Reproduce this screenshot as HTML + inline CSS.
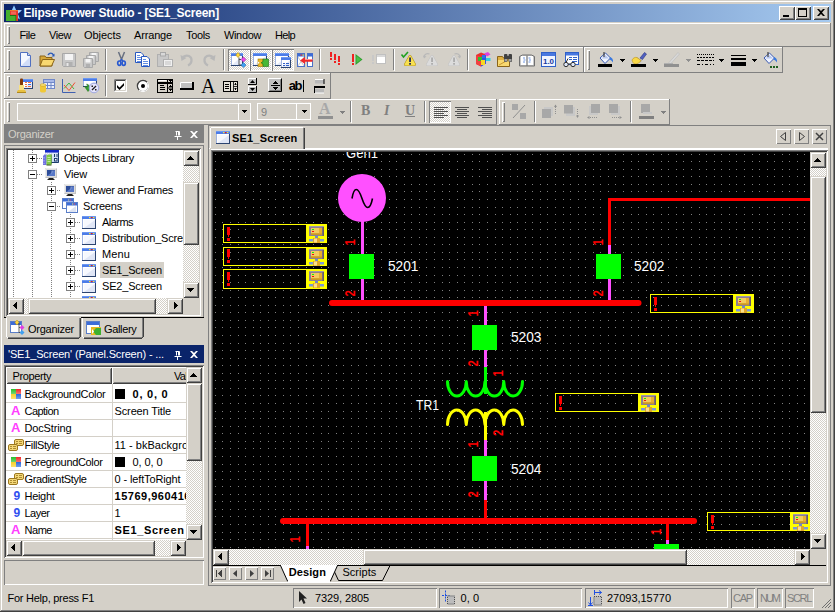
<!DOCTYPE html><html><head><meta charset="utf-8"><title>Elipse Power Studio - [SE1_Screen]</title><style>html,body{margin:0;padding:0;background:#D4D0C8;}body{width:835px;height:612px;position:relative;overflow:hidden;font-family:"Liberation Sans",sans-serif;font-size:11px;}body div,body span,body svg{position:absolute;display:block;box-sizing:border-box;}svg{overflow:visible;}</style></head><body><div style="left:0px;top:0px;width:835px;height:612px;background:#D4D0C8;"></div>
<div style="left:0px;top:0px;width:835px;height:1px;background:#D4D0C8;"></div>
<div style="left:0px;top:0px;width:1px;height:612px;background:#D4D0C8;"></div>
<div style="left:1px;top:1px;width:833px;height:1px;background:#FFFFFF;"></div>
<div style="left:1px;top:1px;width:1px;height:610px;background:#FFFFFF;"></div>
<div style="left:0px;top:611px;width:835px;height:1px;background:#404040;"></div>
<div style="left:834px;top:0px;width:1px;height:612px;background:#404040;"></div>
<div style="left:1px;top:610px;width:833px;height:1px;background:#808080;"></div>
<div style="left:833px;top:1px;width:1px;height:610px;background:#808080;"></div>
<div style="left:4px;top:4px;width:827px;height:18px;background:linear-gradient(90deg,#0A246A 0%,#A6CAF0 100%);"></div>
<span id="t1" style="left:23.5px;top:6px;font-size:12px;color:#fff;line-height:14px;white-space:pre;font-weight:bold;letter-spacing:-0.233px;">Elipse Power Studio - [SE1_Screen]</span>
<div style="left:779px;top:6px;width:16px;height:14px;background:#D4D0C8;box-shadow:inset 1px 1px 0 #fff,inset -1px -1px 0 #404040,inset 2px 2px 0 #D4D0C8,inset -2px -2px 0 #808080;"></div>
<div style="left:795px;top:6px;width:16px;height:14px;background:#D4D0C8;box-shadow:inset 1px 1px 0 #fff,inset -1px -1px 0 #404040,inset 2px 2px 0 #D4D0C8,inset -2px -2px 0 #808080;"></div>
<div style="left:813px;top:6px;width:16px;height:14px;background:#D4D0C8;box-shadow:inset 1px 1px 0 #fff,inset -1px -1px 0 #404040,inset 2px 2px 0 #D4D0C8,inset -2px -2px 0 #808080;"></div>
<div style="left:783px;top:15px;width:6px;height:2px;background:#000000;"></div>
<div style="left:798px;top:8px;width:9px;height:9px;border:1px solid #000;border-top:2px solid #000;"></div>
<svg style="left:817px;top:9px;" width="8" height="7" viewBox="0 0 8 7"><path d="M0 0h2l2 2l2-2h2l-3 3.5l3 3.5h-2l-2-2l-2 2h-2l3-3.5z" fill="#000"/></svg>
<svg style="left:4px;top:4px;" width="20" height="18" viewBox="0 0 20 18"><path d="M10 1.200l2.200 5h5.600l-4 3.600l2.200 5.700l-6-3.800l-6 3.800l2.200-5.700l-4-3.600h5.600z" fill="#8CC8FF"/><path d="M10 1.200l2.200 5h5.600l-4 3.600l2.200 5.700z" fill="#A8D4FF"/><rect x="2" y="6" width="12" height="11" fill="#3FA82F"/><path d="M6 6h8v11h-2v-6h-6z" fill="#E8382C"/><path d="M6 6h8v1h-8z" fill="#F07830"/><path d="M7 7.500h5v3h-5z" fill="#F06858"/><path d="M2 6h4v5h6v6h-10z" fill="#44B030"/><path d="M6 11h6v1h-6z" fill="#207010"/><path d="M11.500 11v6h.8v-6z" fill="#207010"/></svg>
<div style="left:4px;top:23px;width:827px;height:1px;background:#FFFFFF;"></div><div style="left:4px;top:23px;width:1px;height:24px;background:#FFFFFF;"></div><div style="left:4px;top:46px;width:827px;height:1px;background:#808080;"></div><div style="left:830px;top:23px;width:1px;height:24px;background:#808080;"></div><div style="left:7px;top:26px;width:3px;height:18px;background:#D4D0C8;box-shadow:inset 1px 1px 0 #fff,inset -1px -1px 0 #808080;"></div>
<span id="t2" style="left:19.5px;top:28px;font-size:11px;color:#000;line-height:14px;white-space:pre;letter-spacing:-0.434px;">File</span>
<span id="t3" style="left:49px;top:28px;font-size:11px;color:#000;line-height:14px;white-space:pre;letter-spacing:-0.414px;">View</span>
<span id="t4" style="left:84px;top:28px;font-size:11px;color:#000;line-height:14px;white-space:pre;letter-spacing:-0.042px;">Objects</span>
<span id="t5" style="left:134px;top:28px;font-size:11px;color:#000;line-height:14px;white-space:pre;letter-spacing:-0.163px;">Arrange</span>
<span id="t6" style="left:186px;top:28px;font-size:11px;color:#000;line-height:14px;white-space:pre;letter-spacing:-0.338px;">Tools</span>
<span id="t7" style="left:224px;top:28px;font-size:11px;color:#000;line-height:14px;white-space:pre;letter-spacing:-0.354px;">Window</span>
<span id="t8" style="left:275px;top:28px;font-size:11px;color:#000;line-height:14px;white-space:pre;letter-spacing:-0.656px;">Help</span>
<div style="left:4px;top:47px;width:580px;height:1px;background:#FFFFFF;"></div><div style="left:4px;top:47px;width:1px;height:26px;background:#FFFFFF;"></div><div style="left:4px;top:72px;width:580px;height:1px;background:#808080;"></div><div style="left:583px;top:47px;width:1px;height:26px;background:#808080;"></div><div style="left:7px;top:50px;width:3px;height:20px;background:#D4D0C8;box-shadow:inset 1px 1px 0 #fff,inset -1px -1px 0 #808080;"></div>
<div style="left:584px;top:47px;width:199px;height:1px;background:#FFFFFF;"></div><div style="left:584px;top:47px;width:1px;height:26px;background:#FFFFFF;"></div><div style="left:584px;top:72px;width:199px;height:1px;background:#808080;"></div><div style="left:782px;top:47px;width:1px;height:26px;background:#808080;"></div><div style="left:587px;top:50px;width:3px;height:20px;background:#D4D0C8;box-shadow:inset 1px 1px 0 #fff,inset -1px -1px 0 #808080;"></div>
<div style="left:4px;top:73px;width:327px;height:1px;background:#FFFFFF;"></div><div style="left:4px;top:73px;width:1px;height:26px;background:#FFFFFF;"></div><div style="left:4px;top:98px;width:327px;height:1px;background:#808080;"></div><div style="left:330px;top:73px;width:1px;height:26px;background:#808080;"></div><div style="left:7px;top:76px;width:3px;height:20px;background:#D4D0C8;box-shadow:inset 1px 1px 0 #fff,inset -1px -1px 0 #808080;"></div>
<div style="left:4px;top:99px;width:493px;height:1px;background:#FFFFFF;"></div><div style="left:4px;top:99px;width:1px;height:26px;background:#FFFFFF;"></div><div style="left:4px;top:124px;width:493px;height:1px;background:#808080;"></div><div style="left:496px;top:99px;width:1px;height:26px;background:#808080;"></div><div style="left:7px;top:102px;width:3px;height:20px;background:#D4D0C8;box-shadow:inset 1px 1px 0 #fff,inset -1px -1px 0 #808080;"></div>
<div style="left:499px;top:99px;width:171px;height:1px;background:#FFFFFF;"></div><div style="left:499px;top:99px;width:1px;height:26px;background:#FFFFFF;"></div><div style="left:499px;top:124px;width:171px;height:1px;background:#808080;"></div><div style="left:669px;top:99px;width:1px;height:26px;background:#808080;"></div><div style="left:502px;top:102px;width:3px;height:20px;background:#D4D0C8;box-shadow:inset 1px 1px 0 #fff,inset -1px -1px 0 #808080;"></div>
<svg style="left:17px;top:52px;" width="16" height="16" viewBox="0 0 16 16"><path d="M3.500 0.500h7l3 3v11h-10z" fill="#fff" stroke="#5070C0"/><path d="M4 1h6v3h3v10h-9z" fill="#F4F7FF"/><path d="M13 5v9h-9z" fill="#D0DCF8"/><path d="M10.500 0.500v3h3" fill="#C8D4F0" stroke="#5070C0"/></svg>
<svg style="left:39px;top:52px;" width="16" height="16" viewBox="0 0 16 16"><path d="M1 4h5l1 1.500h6v8.500h-12z" fill="#D8A838" stroke="#8A6418"/><path d="M3.500 7.500h12l-3 6.500h-11.500z" fill="#F8D870" stroke="#8A6418"/><path d="M9 3c1.500-2.500 4-2.500 5.500 0" fill="none" stroke="#2858B8" stroke-width="1.400"/><path d="M15.500 1.500v3h-3z" fill="#2858B8"/></svg>
<svg style="left:61px;top:52px;" width="16" height="16" viewBox="0 0 16 16"><path d="M1.500 1.500h13v13h-12l-1-1z" fill="#C8C8C8" stroke="#A8A8A8"/><rect x="4" y="2" width="8" height="6" fill="#F4F4F4"/><rect x="4.500" y="10" width="7" height="4.500" fill="#B0B0B0"/><rect x="5.500" y="11" width="2" height="3" fill="#E8E8E8"/></svg>
<svg style="left:83px;top:52px;" width="16" height="16" viewBox="0 0 16 16"><g transform="translate(6,0)"><path d="M0.500 0.500h9v9h-8l-1-1z" fill="#C8C8C8" stroke="#A8A8A8"/><rect x="2.500" y="1" width="5" height="3.500" fill="#F4F4F4"/><rect x="3" y="6" width="4" height="3" fill="#B0B0B0"/></g><g transform="translate(3,3)"><path d="M0.500 0.500h9v9h-8l-1-1z" fill="#C8C8C8" stroke="#A8A8A8"/><rect x="2.500" y="1" width="5" height="3.500" fill="#F4F4F4"/><rect x="3" y="6" width="4" height="3" fill="#B0B0B0"/></g><g transform="translate(0,6)"><path d="M0.500 0.500h9v9h-8l-1-1z" fill="#C8C8C8" stroke="#A8A8A8"/><rect x="2.500" y="1" width="5" height="3.500" fill="#F4F4F4"/><rect x="3" y="6" width="4" height="3" fill="#B0B0B0"/></g></svg>
<div style="left:105px;top:49px;width:1px;height:21px;background:#808080;"></div><div style="left:106px;top:49px;width:1px;height:22px;background:#FFFFFF;"></div>
<svg style="left:113px;top:52px;" width="16" height="16" viewBox="0 0 16 16"><path d="M5.500 0l3.500 8.500M11.500 0l-3.500 8.500" stroke="#687080" stroke-width="1.500" fill="none"/><ellipse cx="6.300" cy="11.200" rx="1.600" ry="2.200" fill="none" stroke="#2858D0" stroke-width="1.700"/><ellipse cx="10.700" cy="11.200" rx="1.600" ry="2.200" fill="none" stroke="#2858D0" stroke-width="1.700"/><path d="M7 9l1.500-1.500l1.500 1.500" stroke="#2858D0" stroke-width="1.400" fill="none"/></svg>
<svg style="left:135px;top:52px;" width="16" height="16" viewBox="0 0 16 16"><g transform="translate(0,0)"><path d="M0.500 0.500h5.500l2.500 2.500v7.500h-8z" fill="#fff" stroke="#2858C0"/><path d="M2 3.500h3M2 5.500h5M2 7.500h5M2 9.500h5" stroke="#5080E0" stroke-width=".9"/></g><g transform="translate(6,4)"><path d="M0.500 0.500h5.500l2.500 2.500v7.500h-8z" fill="#fff" stroke="#2858C0"/><path d="M2 3.500h3M2 5.500h5M2 7.500h5M2 9.500h5" stroke="#5080E0" stroke-width=".9"/></g></svg>
<svg style="left:157px;top:52px;" width="16" height="16" viewBox="0 0 16 16"><rect x="0.500" y="2.500" width="11" height="12" fill="#C8C8C8" stroke="#B0B0B0"/><rect x="3.500" y="0.500" width="5" height="3.500" fill="#D8D8D8" stroke="#A8A8A8"/><rect x="6.500" y="7.500" width="9" height="7" fill="#F0F0F0" stroke="#B0B0B0"/><path d="M8 10h6M8 12h6" stroke="#C0C0C0"/></svg>
<svg style="left:179px;top:52px;" width="16" height="16" viewBox="0 0 16 16"><path d="M4 5c4-3 9-1 8.500 4c-0.300 2-1.500 3.500-3.500 4.500" fill="none" stroke="#B8B8B8" stroke-width="2.200"/><path d="M1.500 3l1 6l5-3z" fill="#B8B8B8"/></svg>
<svg style="left:201px;top:52px;" width="16" height="16" viewBox="0 0 16 16"><path d="M12 5c-4-3-9-1-8.500 4c0.300 2 1.500 3.500 3.500 4.500" fill="none" stroke="#B8B8B8" stroke-width="2.200"/><path d="M14.500 3l-1 6l-5-3z" fill="#B8B8B8"/></svg>
<div style="left:223px;top:49px;width:1px;height:21px;background:#808080;"></div><div style="left:224px;top:49px;width:1px;height:22px;background:#FFFFFF;"></div>
<div style="left:228px;top:49px;width:22px;height:22px;background-image:conic-gradient(#fff 25%,#D4D0C8 0 50%,#fff 0 75%,#D4D0C8 0);background-size:2px 2px;box-shadow:inset 1px 1px 0 #808080,inset -1px -1px 0 #fff;"></div>
<div style="left:250px;top:49px;width:22px;height:22px;background-image:conic-gradient(#fff 25%,#D4D0C8 0 50%,#fff 0 75%,#D4D0C8 0);background-size:2px 2px;box-shadow:inset 1px 1px 0 #808080,inset -1px -1px 0 #fff;"></div>
<div style="left:272px;top:49px;width:22px;height:22px;background-image:conic-gradient(#fff 25%,#D4D0C8 0 50%,#fff 0 75%,#D4D0C8 0);background-size:2px 2px;box-shadow:inset 1px 1px 0 #808080,inset -1px -1px 0 #fff;"></div>
<svg style="left:231px;top:52px;" width="16" height="16" viewBox="0 0 16 16"><g transform="translate(0,1)"><rect x="0" y="0" width="12" height="13" fill="#fff"/><path d="M11 3v9h-10z" fill="#E4EAF8"/><rect x="0" y="0" width="12" height="3" fill="#4C7CE8"/><rect x="0" y="0" width="12" height="1" fill="#6C98F0"/><rect x="0" y="3" width="1" height="9" fill="#A0B4E0"/><rect x="11" y="3" width="1" height="10" fill="#2C4470"/><rect x="0" y="12" width="12" height="1" fill="#2C4470"/></g><path d="M7 0.500l2.200 2.500l-2.200 2.500l-2.200-2.500z" fill="#FFD840" stroke="#B89000" stroke-width=".6"/><path d="M12.500 5l2.500 2.500l-2.500 2.500l-2.500-2.500z" fill="#E848E8" stroke="#A020A0" stroke-width=".5"/><path d="M12.500 10.500l2.500 2.500l-2.500 2.500l-2.500-2.500z" fill="#40A0F0" stroke="#1060B0" stroke-width=".5"/><path d="M8 5.500v7.500h2M8 7.500h2" stroke="#505050" fill="none"/></svg>
<svg style="left:253px;top:52px;" width="16" height="16" viewBox="0 0 16 16"><g transform="translate(0,1)"><rect x="0" y="0" width="14" height="13" fill="#fff"/><path d="M13 3v9h-12z" fill="#E4EAF8"/><rect x="0" y="0" width="14" height="3" fill="#4C7CE8"/><rect x="0" y="0" width="14" height="1" fill="#6C98F0"/><rect x="0" y="3" width="1" height="9" fill="#A0B4E0"/><rect x="13" y="3" width="1" height="10" fill="#2C4470"/><rect x="0" y="12" width="14" height="1" fill="#2C4470"/></g><rect x="5" y="7" width="5" height="7.500" fill="#E8B828" stroke="#A07800" stroke-width=".6"/><path d="M10 7h5.500v7.500h-5.500v-2.500l-2-1.200l2-1.200z" fill="#48B838" stroke="#207010" stroke-width=".6"/><path d="M5 9.500l1.500 1.200l-1.500 1.200z" fill="#fff"/></svg>
<svg style="left:275px;top:52px;" width="16" height="16" viewBox="0 0 16 16"><g transform="translate(0,1)"><rect x="0" y="0" width="14" height="13" fill="#fff"/><path d="M13 3v9h-12z" fill="#E4EAF8"/><rect x="0" y="0" width="14" height="3" fill="#4C7CE8"/><rect x="0" y="0" width="14" height="1" fill="#6C98F0"/><rect x="0" y="3" width="1" height="9" fill="#A0B4E0"/><rect x="13" y="3" width="1" height="10" fill="#2C4470"/><rect x="0" y="12" width="14" height="1" fill="#2C4470"/></g><g transform="translate(6,5)"><rect x="0" y="0" width="10" height="11" fill="#fff"/><path d="M9 3v7h-8z" fill="#E4EAF8"/><rect x="0" y="0" width="10" height="3" fill="#4C7CE8"/><rect x="0" y="0" width="10" height="1" fill="#6C98F0"/><rect x="0" y="3" width="1" height="7" fill="#A0B4E0"/><rect x="9" y="3" width="1" height="8" fill="#2C4470"/><rect x="0" y="10" width="10" height="1" fill="#2C4470"/></g><path d="M8 11.500h2M11 11.500h3M8 13.500h2M11 13.500h3" stroke="#3060C8"/></svg>
<svg style="left:297px;top:52px;" width="16" height="16" viewBox="0 0 16 16"><rect x="0.500" y="1.500" width="7" height="13" fill="#fff" stroke="#4A70C8"/><rect x="1" y="2" width="6" height="2.500" fill="#3C6CD8"/><rect x="10.500" y="1.500" width="5" height="13" fill="#fff" stroke="#4A70C8"/><rect x="11" y="2" width="5" height="2.500" fill="#3C6CD8"/><path d="M1 5l6 9M7 5l-6 9" stroke="#B0B0B0" stroke-width=".7"/><rect x="3.500" y="2.500" width="1.500" height="1.200" fill="#F03030"/><rect x="5.500" y="2.500" width="1.500" height="1.200" fill="#FFE040"/><path d="M3 8.500l5-3.500v2.300h7.500v2.400h-7.500v2.300z" fill="#F02828"/><path d="M8 7.500h7.500" stroke="#FF9090"/></svg>
<div style="left:319px;top:49px;width:1px;height:21px;background:#808080;"></div><div style="left:320px;top:49px;width:1px;height:22px;background:#FFFFFF;"></div>
<svg style="left:327px;top:52px;" width="16" height="16" viewBox="0 0 16 16"><rect x="3" y="0" width="2" height="5" fill="#F02020"/><rect x="3" y="6" width="2" height="2" fill="#F02020"/><rect x="7" y="2" width="2" height="6" fill="#F02020"/><rect x="7" y="9" width="2" height="2" fill="#F02020"/><rect x="11" y="4" width="2" height="6" fill="#F02020"/><rect x="11" y="11" width="2" height="2" fill="#F02020"/></svg>
<svg style="left:349px;top:52px;" width="16" height="16" viewBox="0 0 16 16"><rect x="3" y="2" width="2" height="8" fill="#F02020"/><rect x="3" y="11" width="2" height="2" fill="#F02020"/><path d="M6.500 2l7 5.500l-7 5.500z" fill="#30A030"/><path d="M7.500 4l4.500 3.500l-4.500 3.500z" fill="#48C048"/></svg>
<svg style="left:371px;top:52px;" width="16" height="16" viewBox="0 0 16 16"><rect x="1" y="3" width="2" height="6" fill="#C8C8C8"/><rect x="1" y="10" width="2" height="2" fill="#C8C8C8"/><rect x="5.500" y="2.500" width="9" height="9" fill="#fff" stroke="#C0C0C0"/><rect x="6" y="3" width="8" height="2" fill="#D8D8D8"/></svg>
<div style="left:393px;top:49px;width:1px;height:21px;background:#808080;"></div><div style="left:394px;top:49px;width:1px;height:22px;background:#FFFFFF;"></div>
<svg style="left:401px;top:52px;" width="16" height="16" viewBox="0 0 16 16"><path d="M9 4.500l4.500 8h-9z" fill="#F8E050" stroke="#B89820" stroke-width="3" stroke-linejoin="round"/><path d="M9 4.500l4.500 8h-9z" fill="#F8E050" stroke="#F8E050" stroke-width="1.800" stroke-linejoin="round"/><rect x="8.200" y="5.500" width="1.700" height="4.500" fill="#182058"/><rect x="8.200" y="11" width="1.700" height="1.700" fill="#182058"/><path d="M0.500 2.500l2 2.500l4.500-5" fill="none" stroke="#20A020" stroke-width="1.600"/></svg>
<svg style="left:423px;top:52px;" width="16" height="16" viewBox="0 0 16 16"><path d="M9 4.500l4.500 8h-9z" fill="#DCDCDC" stroke="#C4C4C4" stroke-width="3" stroke-linejoin="round"/><path d="M9 4.500l4.500 8h-9z" fill="#DCDCDC" stroke="#DCDCDC" stroke-width="1.800" stroke-linejoin="round"/><rect x="8.200" y="5.500" width="1.700" height="4.500" fill="#A8A8A8"/><rect x="8.200" y="11" width="1.700" height="1.700" fill="#A8A8A8"/><path d="M1 5c0.500-3 3-4 5.500-3" fill="none" stroke="#B8B8B8" stroke-width="1.300"/><path d="M0 3.500l1 3l2.500-2z" fill="#B8B8B8"/></svg>
<svg style="left:445px;top:52px;" width="16" height="16" viewBox="0 0 16 16"><path d="M9 4.500l4.500 8h-9z" fill="#DCDCDC" stroke="#C4C4C4" stroke-width="3" stroke-linejoin="round"/><path d="M9 4.500l4.500 8h-9z" fill="#DCDCDC" stroke="#DCDCDC" stroke-width="1.800" stroke-linejoin="round"/><rect x="8.200" y="5.500" width="1.700" height="4.500" fill="#A8A8A8"/><rect x="8.200" y="11" width="1.700" height="1.700" fill="#A8A8A8"/><path d="M15 5c-0.500-3-3-4-5.500-3" fill="none" stroke="#B8B8B8" stroke-width="1.300"/><path d="M16 3.500l-1 3l-2.500-2z" fill="#B8B8B8"/></svg>
<div style="left:467px;top:49px;width:1px;height:21px;background:#808080;"></div><div style="left:468px;top:49px;width:1px;height:22px;background:#FFFFFF;"></div>
<svg style="left:475px;top:52px;" width="16" height="16" viewBox="0 0 16 16"><path d="M1 3l5-2.500l5 2v9l-5 3l-5-2.500z" fill="#E83030"/><path d="M6 5l5-2.500v9l-5 3z" fill="#3058E0"/><path d="M1 3l5 2v9.500l-5-2.500z" fill="#F04040"/><rect x="3" y="5" width="4" height="4" fill="#30C030"/><rect x="6" y="8" width="4" height="5" fill="#F8D820"/><path d="M9 1.500l4-1.500l2.500 2.500l-3.500 2z" fill="#E040E0"/><rect x="11" y="6" width="4.500" height="3" fill="#30D0E0"/><rect x="7" y="3" width="3" height="3" fill="#3070F0"/></svg>
<svg style="left:497px;top:52px;" width="16" height="16" viewBox="0 0 16 16"><path d="M0.500 4.500h5l1 1.500h6v8.500h-12z" fill="#E0B040" stroke="#8A6418"/><path d="M1 8h11v6h-11z" fill="#F8D870"/><path d="M2 13l9-5" stroke="#C89830"/><rect x="7" y="2" width="3.500" height="8" rx="1" fill="#404040"/><rect x="11.500" y="2" width="3.500" height="8" rx="1" fill="#404040"/><rect x="10" y="4" width="2" height="3" fill="#404040"/><rect x="7.500" y="7" width="2.500" height="2.500" fill="#A0A0A0"/><rect x="12" y="7" width="2.500" height="2.500" fill="#A0A0A0"/></svg>
<svg style="left:519px;top:52px;" width="16" height="16" viewBox="0 0 16 16"><path d="M0.500 4.500l3-1.500h4.500l0 0h4.500l3 1.500v9.500h-15z" fill="#C8C8C8" stroke="#707070"/><path d="M2 4h5.500v9h-5.500z" fill="#fff"/><path d="M8.500 4h5.500v9h-5.500z" fill="#fff"/><path d="M8 3.500v10.500" stroke="#707070"/><path d="M9.500 6h2M10 8h2M9.500 10h2M4 6h2M4.500 8h2M4 10h2" stroke="#4878D8" stroke-width=".8"/></svg>
<svg style="left:541px;top:52px;" width="16" height="16" viewBox="0 0 16 16"><rect x="0.500" y="0.500" width="14" height="14" fill="#fff" stroke="#3060C8"/><rect x="1" y="1" width="13" height="3" fill="#4878E0"/><rect x="1" y="4" width="13" height="10" fill="#F0F4FF"/><text x="7.500" y="12" font-size="8" font-weight="bold" fill="#1838A0" text-anchor="middle" font-family="Liberation Sans,sans-serif">1.0</text></svg>
<svg style="left:563px;top:52px;" width="16" height="16" viewBox="0 0 16 16"><rect x="2.500" y="0.500" width="13" height="12" fill="#fff" stroke="#3060C8"/><rect x="3" y="1" width="12" height="2.500" fill="#4878E0"/><path d="M6 5.500h3M10 5.500h4M6 7.500h3M10 7.500h4M9 9.500h5" stroke="#3060C8"/><circle cx="3" cy="12.500" r="2.200" fill="#E0E8F8" stroke="#303030"/><circle cx="10" cy="12.500" r="2.200" fill="#E0E8F8" stroke="#303030"/><path d="M5 12h3M3 10.500l2-4" stroke="#303030" fill="none"/></svg>
<svg style="left:598px;top:52px;" width="16" height="12" viewBox="0 0 16 12"><path d="M2 6l5.500-5l5 5l-5.500 5.500z" fill="#F0F4FF" stroke="#3858B0"/><path d="M3.500 6.500l4-3.500l3.500 3.500z" fill="#B8C8F0"/><path d="M6 0v5" stroke="#404040" stroke-width="1.200"/><path d="M12 5c2 0.500 3.500 2.500 3 5.500c-1.500-2-2-2.500-3.500-3z" fill="#3878E0"/></svg>
<div style="left:598px;top:64px;width:14px;height:3px;background:#000000;"></div>
<div style="left:620px;top:59px;width:5px;height:1px;background:#000;"></div><div style="left:621px;top:60px;width:3px;height:1px;background:#000;"></div><div style="left:622px;top:61px;width:1px;height:1px;background:#000;"></div>
<svg style="left:631px;top:52px;" width="16" height="12" viewBox="0 0 16 12"><path d="M9 6l4.500-5.500l2 1.500l-4 5.500z" fill="#5060C0" stroke="#283080" stroke-width=".6"/><path d="M6 5l5 3.500l-1.500 2l-5-3z" fill="#B0B0B0"/><path d="M1 8c1-2 3-3 5-2.500l4 3c-1 2-3.500 3.500-6 3.500c-1.500 0-2.500-2-3-4z" fill="#F8D848" stroke="#B89020" stroke-width=".6"/></svg>
<div style="left:631px;top:64px;width:15px;height:3px;background:#000000;"></div>
<div style="left:653px;top:59px;width:5px;height:1px;background:#000;"></div><div style="left:654px;top:60px;width:3px;height:1px;background:#000;"></div><div style="left:655px;top:61px;width:1px;height:1px;background:#000;"></div>
<svg style="left:664px;top:52px;" width="16" height="12" viewBox="0 0 16 12"><path d="M5 10.500l9-10l1.500 1.500l-9 10z" fill="#D8D8D8" stroke="#B8B8B8" stroke-width=".6"/><path d="M0 11.500h9" stroke="#B0B0B0"/></svg>
<div style="left:664px;top:64px;width:15px;height:3px;background:#909090;"></div>
<div style="left:686px;top:59px;width:5px;height:1px;background:#909090;"></div><div style="left:687px;top:60px;width:3px;height:1px;background:#909090;"></div><div style="left:688px;top:61px;width:1px;height:1px;background:#909090;"></div>
<svg style="left:697px;top:52px;" width="17" height="16" viewBox="0 0 17 16"><path d="M0 2.500h17" stroke="#000" stroke-dasharray="1 1"/><path d="M0 5.500h17" stroke="#000" stroke-dasharray="2 1"/><path d="M0 8.500h17" stroke="#000" stroke-dasharray="3 1"/><path d="M0 12.500h17" stroke="#000" stroke-dasharray="3 2 1 2"/></svg>
<div style="left:719px;top:59px;width:5px;height:1px;background:#000;"></div><div style="left:720px;top:60px;width:3px;height:1px;background:#000;"></div><div style="left:721px;top:61px;width:1px;height:1px;background:#000;"></div>
<div style="left:731px;top:55px;width:15px;height:1px;background:#000000;"></div>
<div style="left:731px;top:58px;width:15px;height:2px;background:#000000;"></div>
<div style="left:731px;top:62px;width:15px;height:4px;background:#000000;"></div>
<div style="left:752px;top:59px;width:5px;height:1px;background:#000;"></div><div style="left:753px;top:60px;width:3px;height:1px;background:#000;"></div><div style="left:754px;top:61px;width:1px;height:1px;background:#000;"></div>
<svg style="left:762px;top:52px;" width="16" height="12" viewBox="0 0 16 12"><path d="M2 6l5.500-5l5 5l-5.500 5.500z" fill="#F0F4FF" stroke="#3858B0"/><path d="M3.500 6.500l4-3.500l3.500 3.500z" fill="#B8C8F0"/><path d="M6 0v5" stroke="#404040" stroke-width="1.200"/><path d="M12 5c2 0.500 3.500 2.500 3 5.500c-1.500-2-2-2.500-3.500-3z" fill="#3878E0"/></svg>
<div style="left:770px;top:66px;width:2px;height:2px;background:#206020;"></div>
<div style="left:773px;top:66px;width:2px;height:2px;background:#206020;"></div>
<div style="left:776px;top:66px;width:2px;height:2px;background:#206020;"></div>
<svg style="left:17px;top:78px;" width="16" height="16" viewBox="0 0 16 16"><g transform="translate(5,1)"><rect x="0" y="0" width="11" height="10" fill="#fff"/><path d="M10 3v6h-9z" fill="#E4EAF8"/><rect x="0" y="0" width="11" height="3" fill="#4C7CE8"/><rect x="0" y="0" width="11" height="1" fill="#6C98F0"/><rect x="0" y="3" width="1" height="6" fill="#A0B4E0"/><rect x="10" y="3" width="1" height="7" fill="#2C4470"/><rect x="0" y="9" width="11" height="1" fill="#2C4470"/></g><path d="M8 4.500h2M11 4.500h3M8 6.500h2M11 6.500h3M8 8.500h2M11 8.500h3" stroke="#F07040"/><path d="M11 6.500h3" stroke="#4070E0"/><rect x="3" y="0.500" width="3" height="7" rx="1" fill="#803808"/><rect x="2" y="7" width="5" height="5" fill="#F8E080"/><path d="M0 14c0-1.500 1-2 2-2h5c1 0 2 0.500 2 2z" fill="#E8C040"/><path d="M0 14.500h9" stroke="#B08820"/></svg>
<svg style="left:39px;top:78px;" width="16" height="16" viewBox="0 0 16 16"><rect x="4.500" y="1.500" width="11" height="9" fill="#E8EEFC" stroke="#7088C8"/><path d="M4.500 4.500h11M4.500 7.500h11M8.500 1.500v9M12 1.500v9" stroke="#7088C8"/><rect x="5" y="2" width="10" height="2" fill="#A8B8E8"/><path d="M1 7v6c0 2 6 2 6 0v-6z" fill="#F0C838"/><ellipse cx="4" cy="7" rx="3" ry="1.300" fill="#F8E070" stroke="#C09820" stroke-width=".5"/></svg>
<svg style="left:61px;top:78px;" width="16" height="16" viewBox="0 0 16 16"><path d="M1.500 1v13.500h13" stroke="#4060B0" fill="none"/><path d="M3 10.500l5-5.500l5 6" stroke="#40B840" fill="none"/><path d="M3 7l5 5.500l6-8" stroke="#F05030" fill="none"/></svg>
<svg style="left:83px;top:78px;" width="16" height="16" viewBox="0 0 16 16"><g transform="translate(0,0)"><rect x="0" y="0" width="14" height="9" fill="#fff"/><path d="M13 3v5h-12z" fill="#E4EAF8"/><rect x="0" y="0" width="14" height="3" fill="#4C7CE8"/><rect x="0" y="0" width="14" height="1" fill="#6C98F0"/><rect x="0" y="3" width="1" height="5" fill="#A0B4E0"/><rect x="13" y="3" width="1" height="6" fill="#2C4470"/><rect x="0" y="8" width="14" height="1" fill="#2C4470"/></g><path d="M1.500 8.500l3.500 5l3.500-4h-2c0-2-1-3-3-3.500c1 1 1 2 0.500 3z" fill="#38A030" stroke="#207018" stroke-width=".5"/><circle cx="11" cy="10" r="4.800" fill="#E4E4FC" stroke="#A0A8E0"/><path d="M9 12l4-4" stroke="#202020" stroke-width="1.200"/><rect x="8.500" y="7.500" width="1.500" height="1.500" fill="#202020"/><rect x="12" y="11" width="1.500" height="1.500" fill="#202020"/></svg>
<div style="left:105px;top:75px;width:1px;height:21px;background:#808080;"></div><div style="left:106px;top:75px;width:1px;height:22px;background:#FFFFFF;"></div>
<svg style="left:114px;top:79px;" width="13" height="13" viewBox="0 0 13 13"><rect x="0" y="0" width="13" height="13" fill="#fff"/><path d="M0.500 12.500v-12h12" stroke="#808080" fill="none"/><path d="M1.500 11.500v-10h10" stroke="#404040" fill="none"/><path d="M12.500 0.500v12h-12" stroke="#fff" fill="none"/><path d="M11.500 1.500v10h-10" stroke="#D4D0C8" fill="none"/><path d="M3 6l2.500 2.500l4.500-4.500v2.500l-4.500 4.500l-2.500-2.500z" fill="#000"/></svg>
<svg style="left:137px;top:80px;" width="12" height="12" viewBox="0 0 12 12"><circle cx="6" cy="6" r="5.500" fill="#fff" stroke="#808080"/><path d="M2 10a5.500 5.500 0 0 1 8-8" stroke="#404040" fill="none" stroke-width="1.200"/><path d="M10 2a5.500 5.500 0 0 1-8 8" stroke="#fff" fill="none"/><circle cx="6" cy="6" r="2" fill="#000"/></svg>
<svg style="left:157px;top:79px;" width="16" height="14" viewBox="0 0 16 14"><rect x="0.500" y="0.500" width="15" height="13" fill="#D4D0C8" stroke="#000"/><path d="M0 4h16" stroke="#000" stroke-width="2"/><path d="M10.500 0v14" stroke="#000"/><path d="M1.500 1.500h8" stroke="#fff"/><path d="M12 1.500h3M13 2.500h1" stroke="#000"/><path d="M3 6.500h4M3 8.500h5M3 10.500h5" stroke="#000"/><path d="M10 9h6" stroke="#000"/><path d="M12 7.500h3M13 6.500h1M12 10.500h3M13 11.500h1" stroke="#000"/></svg>
<svg style="left:180px;top:82px;" width="14" height="8" viewBox="0 0 14 8"><rect x="0" y="0" width="14" height="8" fill="#C0C0C0"/><path d="M0.500 7v-6.500h13" stroke="#fff" fill="none"/><path d="M13 0v7h-13" stroke="#000" fill="none" stroke-width="2"/></svg>
<span id="t9" style="left:201px;top:76px;font-size:20px;color:#000;line-height:20px;white-space:pre;font-family:'Liberation Serif',serif;letter-spacing:1.556px;">A</span>
<svg style="left:223px;top:81px;" width="15" height="11" viewBox="0 0 15 11"><rect x="0.500" y="0.500" width="14" height="10" fill="#E4E0D8" stroke="#000"/><path d="M7.500 0v11" stroke="#000"/><path d="M2 3.500h4M2 5.500h4M2 7.500h4" stroke="#000"/><path d="M10.500 0v11M10.500 5.500h4" stroke="#000" stroke-width=".8"/><path d="M11.500 3.500h2M12 2.500h1M11.500 7.500h2M12 8.500h1" stroke="#000"/></svg>
<svg style="left:248px;top:78px;" width="9" height="15" viewBox="0 0 9 15"><rect x="0" y="0" width="9" height="7" fill="#C0C0C0"/><path d="M0.500 7v-6.500h8.500" stroke="#fff" fill="none"/><path d="M8.500 0v6.500h-8.500" stroke="#000" fill="none"/><rect x="0" y="8" width="9" height="7" fill="#C0C0C0"/><path d="M0.500 15v-6.500h8.500" stroke="#fff" fill="none"/><path d="M8.500 8v6.500h-8.500" stroke="#000" fill="none"/><path d="M2 5h5l-2.500-3zM2 10h5l-2.500 3z" fill="#000"/></svg>
<svg style="left:268px;top:78px;" width="14" height="14" viewBox="0 0 14 14"><rect x="0" y="0" width="14" height="14" fill="#C0C0C0"/><path d="M0.500 13.500v-13h13" stroke="#fff" fill="none"/><path d="M13.500 0.500v13h-13" stroke="#000" fill="none"/><path d="M12.500 1.500v11h-11" stroke="#808080" fill="none"/><path d="M7 3h1v1h1v1h1v1h-5v-1h1v-1h1zM5 9h5v1h-1v1h-1v1h-1v-1h-1v-1h-1z" fill="#000"/><path d="M3 7.500h9" stroke="#000"/></svg>
<span id="t10" style="left:288.7px;top:78px;font-size:13px;color:#000;line-height:16px;white-space:pre;font-weight:bold;letter-spacing:-1.343px;">ab</span>
<div style="left:303px;top:80px;width:1px;height:12px;background:#000000;"></div>
<svg style="left:313px;top:79px;" width="12" height="15" viewBox="0 0 12 15"><rect x="2" y="0.500" width="9" height="4" fill="#B8B8B8"/><path d="M2 0.500h9" stroke="#fff"/><path d="M11 0v5" stroke="#000"/><path d="M1 8h11" stroke="#000" stroke-width="2"/><path d="M1.500 8v6" stroke="#000"/><rect x="2" y="10" width="9" height="4" fill="#B8B8B8"/><path d="M2 14h9" stroke="#fff"/></svg>
<div style="left:17px;top:103px;width:234px;height:18px;border:1px solid #fff;"></div><div style="left:238px;top:103px;width:1px;height:18px;background:#FFFFFF;"></div>
<div style="left:242px;top:110px;width:5px;height:1px;background:#000;"></div><div style="left:243px;top:111px;width:3px;height:1px;background:#000;"></div><div style="left:244px;top:112px;width:1px;height:1px;background:#000;"></div>
<div style="left:257px;top:103px;width:54px;height:17px;border:1px solid #fff;"></div><div style="left:296px;top:103px;width:1px;height:17px;background:#FFFFFF;"></div>
<div style="left:302px;top:110px;width:5px;height:1px;background:#000;"></div><div style="left:303px;top:111px;width:3px;height:1px;background:#000;"></div><div style="left:304px;top:112px;width:1px;height:1px;background:#000;"></div>
<span id="t11" style="left:261px;top:105px;font-size:11px;color:#808080;line-height:14px;white-space:pre;letter-spacing:-0.133px;">9</span>
<span id="t12" style="left:319px;top:101px;font-size:16px;color:#A8A8A8;line-height:16px;white-space:pre;font-weight:bold;font-family:'Liberation Serif',serif;letter-spacing:1.445px;">A</span>
<div style="left:318px;top:116px;width:15px;height:3px;background:#909090;"></div>
<div style="left:340px;top:111px;width:5px;height:1px;background:#808080;"></div><div style="left:341px;top:112px;width:3px;height:1px;background:#808080;"></div><div style="left:342px;top:113px;width:1px;height:1px;background:#808080;"></div>
<div style="left:350px;top:101px;width:1px;height:21px;background:#808080;"></div><div style="left:351px;top:101px;width:1px;height:22px;background:#FFFFFF;"></div>
<span id="t13" style="left:361px;top:103px;font-size:14px;color:#808080;line-height:16px;white-space:pre;font-weight:bold;font-family:'Liberation Serif',serif;letter-spacing:0.650px;">B</span>
<span id="t14" style="left:384px;top:103px;font-size:14px;color:#808080;line-height:16px;white-space:pre;font-weight:bold;font-style:italic;font-family:'Liberation Serif',serif;letter-spacing:1.539px;">I</span>
<span id="t15" style="left:405px;top:103px;font-size:14px;color:#808080;line-height:16px;white-space:pre;font-weight:bold;font-family:'Liberation Serif',serif;letter-spacing:-0.112px;text-decoration:underline;">U</span>
<div style="left:424px;top:101px;width:1px;height:21px;background:#808080;"></div><div style="left:425px;top:101px;width:1px;height:22px;background:#FFFFFF;"></div>
<div style="left:429px;top:101px;width:22px;height:22px;background-image:conic-gradient(#fff 25%,#D4D0C8 0 50%,#fff 0 75%,#D4D0C8 0);background-size:2px 2px;box-shadow:inset 1px 1px 0 #808080,inset -1px -1px 0 #fff;"></div>
<div style="left:434px;top:107px;width:14px;height:1px;background:#505050;"></div><div style="left:434px;top:109px;width:10px;height:1px;background:#505050;"></div><div style="left:434px;top:111px;width:14px;height:1px;background:#505050;"></div><div style="left:434px;top:113px;width:10px;height:1px;background:#505050;"></div><div style="left:434px;top:115px;width:14px;height:1px;background:#505050;"></div><div style="left:434px;top:117px;width:10px;height:1px;background:#505050;"></div>
<div style="left:455px;top:107px;width:14px;height:1px;background:#505050;"></div><div style="left:457px;top:109px;width:10px;height:1px;background:#505050;"></div><div style="left:455px;top:111px;width:14px;height:1px;background:#505050;"></div><div style="left:457px;top:113px;width:10px;height:1px;background:#505050;"></div><div style="left:455px;top:115px;width:14px;height:1px;background:#505050;"></div><div style="left:457px;top:117px;width:10px;height:1px;background:#505050;"></div>
<div style="left:478px;top:107px;width:14px;height:1px;background:#505050;"></div><div style="left:482px;top:109px;width:10px;height:1px;background:#505050;"></div><div style="left:478px;top:111px;width:14px;height:1px;background:#505050;"></div><div style="left:482px;top:113px;width:10px;height:1px;background:#505050;"></div><div style="left:478px;top:115px;width:14px;height:1px;background:#505050;"></div><div style="left:482px;top:117px;width:10px;height:1px;background:#505050;"></div>
<svg style="left:511px;top:104px;" width="16" height="15" viewBox="0 0 16 15"><rect x="1" y="0" width="6" height="6" fill="#A8A8A8"/><rect x="9" y="9" width="6" height="6" fill="#A8A8A8"/><path d="M2 14l12-13" stroke="#909090"/></svg>
<div style="left:534px;top:101px;width:1px;height:21px;background:#808080;"></div><div style="left:535px;top:101px;width:1px;height:22px;background:#FFFFFF;"></div>
<svg style="left:541px;top:104px;" width="16" height="15" viewBox="0 0 16 15"><rect x="3" y="3" width="9" height="9" fill="#C8C8C8"/><rect x="1" y="5" width="9" height="9" fill="#A8A8A8"/><path d="M14.500 1v9" stroke="#909090" stroke-dasharray="1 1"/><path d="M13 3l1.500-2.500l1.500 2.500z" fill="#909090"/></svg>
<svg style="left:563px;top:104px;" width="17" height="15" viewBox="0 0 17 15"><rect x="3" y="3" width="9" height="9" fill="#C8C8C8"/><rect x="1" y="1" width="9" height="8.500" fill="#A8A8A8"/><path d="M14.500 5v8" stroke="#909090" stroke-dasharray="1 1"/><path d="M13 11.500l1.500 2.500l1.500-2.500z" fill="#909090"/></svg>
<svg style="left:586px;top:104px;" width="16" height="16" viewBox="0 0 16 16"><rect x="3" y="2" width="9" height="9" fill="#C8C8C8"/><rect x="5" y="0" width="9" height="9" fill="#A8A8A8"/><path d="M2 13.500h9" stroke="#909090" stroke-dasharray="1 1"/><path d="M3.500 12l-2.500 1.500l2.500 1.500z" fill="#909090"/></svg>
<svg style="left:607px;top:104px;" width="16" height="16" viewBox="0 0 16 16"><rect x="4" y="2" width="9" height="9" fill="#C8C8C8"/><rect x="2" y="0" width="9" height="9" fill="#A8A8A8"/><path d="M5 13.500h9" stroke="#909090" stroke-dasharray="1 1"/><path d="M12.500 12l2.500 1.500l-2.500 1.500z" fill="#909090"/></svg>
<div style="left:630px;top:101px;width:1px;height:21px;background:#808080;"></div><div style="left:631px;top:101px;width:1px;height:22px;background:#FFFFFF;"></div>
<div style="left:641px;top:104px;width:9px;height:9px;background:#A8A8A8;"></div>
<div style="left:643px;top:112px;width:9px;height:2px;background:#C8C8C8;"></div>
<div style="left:639px;top:116px;width:15px;height:3px;background:#808080;"></div>
<div style="left:661px;top:111px;width:5px;height:1px;background:#808080;"></div><div style="left:662px;top:112px;width:3px;height:1px;background:#808080;"></div><div style="left:663px;top:113px;width:1px;height:1px;background:#808080;"></div>
<div style="left:4px;top:124px;width:200px;height:19px;background:#808080;"></div>
<span id="t16" style="left:8px;top:127px;font-size:11px;color:#D4D0C8;line-height:14px;white-space:pre;letter-spacing:-0.256px;">Organizer</span>
<svg style="left:174px;top:131px;" width="8" height="9" viewBox="0 0 8 9"><path d="M1.5 0.5h4M2.5 0.5v4M5.5 0.5v4M4.5 0.5v4M0.5 5.5h7M3.5 5.5v3.5" stroke="#fff" fill="none"/></svg>
<svg style="left:190px;top:131px;" width="8" height="7" viewBox="0 0 8 7"><path d="M0 0h2l2 2l2-2h2l-3 3.5l3 3.5h-2l-2-2l-2 2h-2l3-3.5z" fill="#fff"/></svg>
<div style="left:4px;top:145px;width:200px;height:172px;border:1px solid #808080;border-bottom:none;"></div>
<div style="left:4px;top:317px;width:2px;height:1px;background:#000000;"></div>
<div style="left:81px;top:317px;width:123px;height:1px;background:#000000;"></div>
<div style="left:6px;top:148px;width:195px;height:168px;background:#FFFFFF;box-shadow:inset 1px 1px 0 #808080,inset -1px -1px 0 #fff,inset 2px 2px 0 #404040,inset -2px -2px 0 #D4D0C8;"></div>
<div style="left:8px;top:150px;width:175px;height:148px;overflow:hidden;"><div style="left:5px;top:0px;width:1px;height:164px;background-image:linear-gradient(#808080 50%,transparent 0);background-size:1px 2px;background-position:0 0px;"></div><div style="left:24px;top:0px;width:1px;height:164px;background-image:linear-gradient(#808080 50%,transparent 0);background-size:1px 2px;background-position:0 0px;"></div><div style="left:43px;top:32px;width:1px;height:132px;background-image:linear-gradient(#808080 50%,transparent 0);background-size:1px 2px;background-position:0 0px;"></div><div style="left:62px;top:64px;width:1px;height:100px;background-image:linear-gradient(#808080 50%,transparent 0);background-size:1px 2px;background-position:0 0px;"></div><div style="left:29px;top:8px;width:5px;height:1px;background-image:linear-gradient(90deg,#808080 50%,transparent 0);background-size:2px 1px;background-position:0px 0;"></div><div style="left:20px;top:4px;width:9px;height:9px;background:#FFFFFF;border:1px solid #808080;"></div><div style="left:22px;top:8px;width:5px;height:1px;background:#000000;"></div><div style="left:24px;top:6px;width:1px;height:5px;background:#000000;"></div><svg style="left:35px;top:0px;" width="16" height="16" viewBox="0 0 16 16"><defs><linearGradient id="ol" x1="0" y1="0" x2="1" y2="1"><stop offset="0" stop-color="#fff"/><stop offset="1" stop-color="#B8CCF0"/></linearGradient></defs><rect x="2" y="0" width="14" height="13" fill="url(#ol)"/><rect x="2" y="0" width="14" height="2.600" fill="#1428C8"/><path d="M15.500 2.500v10h-8" stroke="#1C3C6C" fill="none"/><rect x="11" y="4" width="1" height="3" fill="#1C3C6C"/><rect x="13.500" y="4" width="1" height="3" fill="#1C3C6C"/><rect x="11.500" y="8.500" width="2.500" height="2.500" fill="#fff" stroke="#1C3C6C"/><path d="M0 6l1.500-1.500h2v10.500h-3.500z" fill="#7070E0"/><path d="M1 7v7" stroke="#B0B0FF" stroke-dasharray="1.500 1.500"/><path d="M3.500 5l5-1v10.500l-5 0.500z" fill="#80C848"/><path d="M8.500 4l0.500 0.500v9.500l-0.500 0.500z" fill="#3C7818"/><path d="M4.500 7.500h3M4.500 9.500h3M4.500 11.500h3" stroke="#C0E8A0"/><path d="M3.500 15h5" stroke="#305010"/><path d="M1.500 4.500l1-1M3.500 4.500l1-1M5.500 4.500l1-1M7.500 4.500l1-1" stroke="#A0A0D8" stroke-width=".8"/></svg><span id="t17" style="left:56px;top:1px;font-size:11px;color:#000;line-height:14px;white-space:pre;letter-spacing:-0.265px;">Objects Library</span><div style="left:29px;top:24px;width:5px;height:1px;background-image:linear-gradient(90deg,#808080 50%,transparent 0);background-size:2px 1px;background-position:0px 0;"></div><div style="left:20px;top:20px;width:9px;height:9px;background:#FFFFFF;border:1px solid #808080;"></div><div style="left:22px;top:24px;width:5px;height:1px;background:#000000;"></div><svg style="left:35px;top:16px;" width="16" height="16" viewBox="0 0 16 16"><rect x="2.500" y="2.500" width="11" height="9" fill="#DCDCDC" stroke="#C4C4C4"/><path d="M2.500 11.500v-9h11" fill="none" stroke="#ECECEC"/><rect x="4" y="4" width="8" height="6" fill="#2C4C98"/><path d="M4 10l8-6v6z" fill="#5878C8"/><path d="M8.500 4.500h2.500l-3 4z" fill="#90A8E0" opacity=".7"/><path d="M6 12h4l2 2h-8z" fill="#202020"/></svg><span id="t18" style="left:56px;top:17px;font-size:11px;color:#000;line-height:14px;white-space:pre;letter-spacing:-0.161px;">View</span><div style="left:48px;top:40px;width:5px;height:1px;background-image:linear-gradient(90deg,#808080 50%,transparent 0);background-size:2px 1px;background-position:1px 0;"></div><div style="left:39px;top:36px;width:9px;height:9px;background:#FFFFFF;border:1px solid #808080;"></div><div style="left:41px;top:40px;width:5px;height:1px;background:#000000;"></div><div style="left:43px;top:38px;width:1px;height:5px;background:#000000;"></div><svg style="left:54px;top:32px;" width="16" height="16" viewBox="0 0 16 16"><rect x="2.500" y="2.500" width="11" height="9" fill="#DCDCDC" stroke="#C4C4C4"/><path d="M2.500 11.500v-9h11" fill="none" stroke="#ECECEC"/><rect x="4" y="4" width="8" height="6" fill="#2C4C98"/><path d="M4 10l8-6v6z" fill="#5878C8"/><path d="M8.500 4.500h2.500l-3 4z" fill="#90A8E0" opacity=".7"/><path d="M6 12h4l2 2h-8z" fill="#202020"/></svg><span id="t19" style="left:75px;top:33px;font-size:11px;color:#000;line-height:14px;white-space:pre;letter-spacing:-0.305px;">Viewer and Frames</span><div style="left:48px;top:56px;width:5px;height:1px;background-image:linear-gradient(90deg,#808080 50%,transparent 0);background-size:2px 1px;background-position:1px 0;"></div><div style="left:39px;top:52px;width:9px;height:9px;background:#FFFFFF;border:1px solid #808080;"></div><div style="left:41px;top:56px;width:5px;height:1px;background:#000000;"></div><svg style="left:54px;top:48px;" width="16" height="16" viewBox="0 0 16 16"><rect x="0.5" y="0.5" width="11" height="10" fill="#fff" stroke="#5A7EC8"/><rect x="1" y="1" width="10" height="2.5" fill="#3C6CD8"/><rect x="6" y="1.5" width="1.2" height="1" fill="#FFE060"/><rect x="8" y="1.5" width="1.2" height="1" fill="#FF5050"/><g transform="translate(4,4)"><rect x="0.5" y="0.5" width="11" height="10" fill="#fff" stroke="#5A7EC8"/><rect x="1" y="1" width="10" height="2.5" fill="#3C6CD8"/><rect x="6" y="1.5" width="1.2" height="1" fill="#FFE060"/><rect x="8" y="1.5" width="1.2" height="1" fill="#FF5050"/><path d="M10 4v6h-8z" fill="#DDE3F2"/></g></svg><span id="t20" style="left:75px;top:49px;font-size:11px;color:#000;line-height:14px;white-space:pre;letter-spacing:-0.195px;">Screens</span><div style="left:67px;top:72px;width:5px;height:1px;background-image:linear-gradient(90deg,#808080 50%,transparent 0);background-size:2px 1px;background-position:0px 0;"></div><div style="left:58px;top:68px;width:9px;height:9px;background:#FFFFFF;border:1px solid #808080;"></div><div style="left:60px;top:72px;width:5px;height:1px;background:#000000;"></div><div style="left:62px;top:70px;width:1px;height:5px;background:#000000;"></div><svg style="left:73px;top:64px;" width="16" height="16" viewBox="0 0 16 16"><rect x="1" y="2" width="14" height="13" fill="#fff"/><path d="M3 6h11v8h-11z" fill="#F6F8FE"/><path d="M14 6v8h-11z" fill="#E0E6F6"/><rect x="1" y="2" width="14" height="3" fill="#4C7CE8"/><rect x="1" y="2" width="14" height="1" fill="#6C98F0"/><rect x="8" y="3" width="1.400" height="1.200" fill="#F8E040"/><rect x="10" y="3" width="1.400" height="1.200" fill="#F01020"/><rect x="12" y="3" width="1.400" height="1.200" fill="#F8E040"/><rect x="1" y="5" width="1" height="9" fill="#A0B4E0"/><rect x="14" y="5" width="1" height="10" fill="#2C4470"/><rect x="1" y="14" width="14" height="1" fill="#2C4470"/></svg><span id="t21" style="left:94px;top:65px;font-size:11px;color:#000;line-height:14px;white-space:pre;letter-spacing:-0.538px;">Alarms</span><div style="left:67px;top:88px;width:5px;height:1px;background-image:linear-gradient(90deg,#808080 50%,transparent 0);background-size:2px 1px;background-position:0px 0;"></div><div style="left:58px;top:84px;width:9px;height:9px;background:#FFFFFF;border:1px solid #808080;"></div><div style="left:60px;top:88px;width:5px;height:1px;background:#000000;"></div><div style="left:62px;top:86px;width:1px;height:5px;background:#000000;"></div><svg style="left:73px;top:80px;" width="16" height="16" viewBox="0 0 16 16"><rect x="1" y="2" width="14" height="13" fill="#fff"/><path d="M3 6h11v8h-11z" fill="#F6F8FE"/><path d="M14 6v8h-11z" fill="#E0E6F6"/><rect x="1" y="2" width="14" height="3" fill="#4C7CE8"/><rect x="1" y="2" width="14" height="1" fill="#6C98F0"/><rect x="8" y="3" width="1.400" height="1.200" fill="#F8E040"/><rect x="10" y="3" width="1.400" height="1.200" fill="#F01020"/><rect x="12" y="3" width="1.400" height="1.200" fill="#F8E040"/><rect x="1" y="5" width="1" height="9" fill="#A0B4E0"/><rect x="14" y="5" width="1" height="10" fill="#2C4470"/><rect x="1" y="14" width="14" height="1" fill="#2C4470"/></svg><span id="t22" style="left:94px;top:81px;font-size:11px;color:#000;line-height:14px;white-space:pre;letter-spacing:-0.158px;">Distribution_Screen</span><div style="left:67px;top:104px;width:5px;height:1px;background-image:linear-gradient(90deg,#808080 50%,transparent 0);background-size:2px 1px;background-position:0px 0;"></div><div style="left:58px;top:100px;width:9px;height:9px;background:#FFFFFF;border:1px solid #808080;"></div><div style="left:60px;top:104px;width:5px;height:1px;background:#000000;"></div><div style="left:62px;top:102px;width:1px;height:5px;background:#000000;"></div><svg style="left:73px;top:96px;" width="16" height="16" viewBox="0 0 16 16"><rect x="1" y="2" width="14" height="13" fill="#fff"/><path d="M3 6h11v8h-11z" fill="#F6F8FE"/><path d="M14 6v8h-11z" fill="#E0E6F6"/><rect x="1" y="2" width="14" height="3" fill="#4C7CE8"/><rect x="1" y="2" width="14" height="1" fill="#6C98F0"/><rect x="8" y="3" width="1.400" height="1.200" fill="#F8E040"/><rect x="10" y="3" width="1.400" height="1.200" fill="#F01020"/><rect x="12" y="3" width="1.400" height="1.200" fill="#F8E040"/><rect x="1" y="5" width="1" height="9" fill="#A0B4E0"/><rect x="14" y="5" width="1" height="10" fill="#2C4470"/><rect x="1" y="14" width="14" height="1" fill="#2C4470"/></svg><span id="t23" style="left:94px;top:97px;font-size:11px;color:#000;line-height:14px;white-space:pre;letter-spacing:0.119px;">Menu</span><div style="left:67px;top:120px;width:5px;height:1px;background-image:linear-gradient(90deg,#808080 50%,transparent 0);background-size:2px 1px;background-position:0px 0;"></div><div style="left:58px;top:116px;width:9px;height:9px;background:#FFFFFF;border:1px solid #808080;"></div><div style="left:60px;top:120px;width:5px;height:1px;background:#000000;"></div><div style="left:62px;top:118px;width:1px;height:5px;background:#000000;"></div><svg style="left:73px;top:112px;" width="16" height="16" viewBox="0 0 16 16"><rect x="1" y="2" width="14" height="13" fill="#fff"/><path d="M3 6h11v8h-11z" fill="#F6F8FE"/><path d="M14 6v8h-11z" fill="#E0E6F6"/><rect x="1" y="2" width="14" height="3" fill="#4C7CE8"/><rect x="1" y="2" width="14" height="1" fill="#6C98F0"/><rect x="8" y="3" width="1.400" height="1.200" fill="#F8E040"/><rect x="10" y="3" width="1.400" height="1.200" fill="#F01020"/><rect x="12" y="3" width="1.400" height="1.200" fill="#F8E040"/><rect x="1" y="5" width="1" height="9" fill="#A0B4E0"/><rect x="14" y="5" width="1" height="10" fill="#2C4470"/><rect x="1" y="14" width="14" height="1" fill="#2C4470"/></svg><div style="left:92px;top:112px;width:64px;height:16px;background:#D4D0C8;"></div><span id="t24" style="left:94px;top:113px;font-size:11px;color:#000;line-height:14px;white-space:pre;letter-spacing:-0.177px;">SE1_Screen</span><div style="left:67px;top:136px;width:5px;height:1px;background-image:linear-gradient(90deg,#808080 50%,transparent 0);background-size:2px 1px;background-position:0px 0;"></div><div style="left:58px;top:132px;width:9px;height:9px;background:#FFFFFF;border:1px solid #808080;"></div><div style="left:60px;top:136px;width:5px;height:1px;background:#000000;"></div><div style="left:62px;top:134px;width:1px;height:5px;background:#000000;"></div><svg style="left:73px;top:128px;" width="16" height="16" viewBox="0 0 16 16"><rect x="1" y="2" width="14" height="13" fill="#fff"/><path d="M3 6h11v8h-11z" fill="#F6F8FE"/><path d="M14 6v8h-11z" fill="#E0E6F6"/><rect x="1" y="2" width="14" height="3" fill="#4C7CE8"/><rect x="1" y="2" width="14" height="1" fill="#6C98F0"/><rect x="8" y="3" width="1.400" height="1.200" fill="#F8E040"/><rect x="10" y="3" width="1.400" height="1.200" fill="#F01020"/><rect x="12" y="3" width="1.400" height="1.200" fill="#F8E040"/><rect x="1" y="5" width="1" height="9" fill="#A0B4E0"/><rect x="14" y="5" width="1" height="10" fill="#2C4470"/><rect x="1" y="14" width="14" height="1" fill="#2C4470"/></svg><span id="t25" style="left:94px;top:129px;font-size:11px;color:#000;line-height:14px;white-space:pre;letter-spacing:-0.178px;">SE2_Screen</span><div style="left:67px;top:152px;width:5px;height:1px;background-image:linear-gradient(90deg,#808080 50%,transparent 0);background-size:2px 1px;background-position:0px 0;"></div><div style="left:58px;top:148px;width:9px;height:9px;background:#FFFFFF;border:1px solid #808080;"></div><div style="left:60px;top:152px;width:5px;height:1px;background:#000000;"></div><div style="left:62px;top:150px;width:1px;height:5px;background:#000000;"></div><svg style="left:73px;top:144px;" width="16" height="16" viewBox="0 0 16 16"><rect x="1" y="2" width="14" height="13" fill="#fff"/><path d="M3 6h11v8h-11z" fill="#F6F8FE"/><path d="M14 6v8h-11z" fill="#E0E6F6"/><rect x="1" y="2" width="14" height="3" fill="#4C7CE8"/><rect x="1" y="2" width="14" height="1" fill="#6C98F0"/><rect x="8" y="3" width="1.400" height="1.200" fill="#F8E040"/><rect x="10" y="3" width="1.400" height="1.200" fill="#F01020"/><rect x="12" y="3" width="1.400" height="1.200" fill="#F8E040"/><rect x="1" y="5" width="1" height="9" fill="#A0B4E0"/><rect x="14" y="5" width="1" height="10" fill="#2C4470"/><rect x="1" y="14" width="14" height="1" fill="#2C4470"/></svg><span id="t26" style="left:94px;top:145px;font-size:11px;color:#000;line-height:14px;white-space:pre;letter-spacing:0.775px;">S</span></div>
<div style="left:183px;top:150px;width:16px;height:148px;background-image:conic-gradient(#fff 25%,#D4D0C8 0 50%,#fff 0 75%,#D4D0C8 0);background-size:2px 2px;background-position:1px 0px;"></div>
<div style="left:183px;top:150px;width:16px;height:16px;background:#D4D0C8;box-shadow:inset 1px 1px 0 #D4D0C8,inset -1px -1px 0 #404040,inset 2px 2px 0 #fff,inset -2px -2px 0 #808080;"><div style="left:7px;top:6px;width:1px;height:1px;background:#000;"></div><div style="left:6px;top:7px;width:3px;height:1px;background:#000;"></div><div style="left:5px;top:8px;width:5px;height:1px;background:#000;"></div><div style="left:4px;top:9px;width:7px;height:1px;background:#000;"></div></div>
<div style="left:183px;top:282px;width:16px;height:16px;background:#D4D0C8;box-shadow:inset 1px 1px 0 #D4D0C8,inset -1px -1px 0 #404040,inset 2px 2px 0 #fff,inset -2px -2px 0 #808080;"><div style="left:4px;top:6px;width:7px;height:1px;background:#000;"></div><div style="left:5px;top:7px;width:5px;height:1px;background:#000;"></div><div style="left:6px;top:8px;width:3px;height:1px;background:#000;"></div><div style="left:7px;top:9px;width:1px;height:1px;background:#000;"></div></div>
<div style="left:183px;top:182px;width:16px;height:63px;background:#D4D0C8;box-shadow:inset 1px 1px 0 #D4D0C8,inset -1px -1px 0 #404040,inset 2px 2px 0 #fff,inset -2px -2px 0 #808080;"></div>
<div style="left:8px;top:298px;width:175px;height:16px;background-image:conic-gradient(#fff 25%,#D4D0C8 0 50%,#fff 0 75%,#D4D0C8 0);background-size:2px 2px;background-position:0px 0px;"></div>
<div style="left:8px;top:298px;width:16px;height:16px;background:#D4D0C8;box-shadow:inset 1px 1px 0 #D4D0C8,inset -1px -1px 0 #404040,inset 2px 2px 0 #fff,inset -2px -2px 0 #808080;"><div style="left:5px;top:7px;width:1px;height:1px;background:#000;"></div><div style="left:6px;top:6px;width:1px;height:3px;background:#000;"></div><div style="left:7px;top:5px;width:1px;height:5px;background:#000;"></div><div style="left:8px;top:4px;width:1px;height:7px;background:#000;"></div></div>
<div style="left:167px;top:298px;width:16px;height:16px;background:#D4D0C8;box-shadow:inset 1px 1px 0 #D4D0C8,inset -1px -1px 0 #404040,inset 2px 2px 0 #fff,inset -2px -2px 0 #808080;"><div style="left:7px;top:4px;width:1px;height:7px;background:#000;"></div><div style="left:8px;top:5px;width:1px;height:5px;background:#000;"></div><div style="left:9px;top:6px;width:1px;height:3px;background:#000;"></div><div style="left:10px;top:7px;width:1px;height:1px;background:#000;"></div></div>
<div style="left:28px;top:298px;width:128px;height:16px;background:#D4D0C8;box-shadow:inset 1px 1px 0 #D4D0C8,inset -1px -1px 0 #404040,inset 2px 2px 0 #fff,inset -2px -2px 0 #808080;"></div>
<div style="left:183px;top:298px;width:16px;height:16px;background:#D4D0C8;"></div>
<div style="left:82px;top:318px;width:1px;height:19px;background:#FFFFFF;"></div>
<div style="left:83px;top:337px;width:60px;height:1px;background:#808080;"></div>
<div style="left:84px;top:338px;width:58px;height:1px;background:#404040;"></div>
<div style="left:142px;top:318px;width:1px;height:20px;background:#808080;"></div>
<div style="left:143px;top:318px;width:1px;height:20px;background:#404040;"></div>
<div style="left:83px;top:337px;width:1px;height:1px;background:#FFFFFF;"></div>
<div style="left:142px;top:337px;width:1px;height:1px;background:#404040;"></div>
<div style="left:143px;top:337px;width:1px;height:1px;background:#D4D0C8;"></div>
<div style="left:143px;top:338px;width:1px;height:1px;background:#D4D0C8;"></div>
<div style="left:6px;top:318px;width:1px;height:19px;background:#FFFFFF;"></div>
<div style="left:8px;top:337px;width:71px;height:1px;background:#808080;"></div>
<div style="left:8px;top:338px;width:71px;height:1px;background:#404040;"></div>
<div style="left:79px;top:318px;width:1px;height:20px;background:#808080;"></div>
<div style="left:80px;top:318px;width:1px;height:20px;background:#404040;"></div>
<div style="left:7px;top:337px;width:1px;height:1px;background:#FFFFFF;"></div>
<div style="left:79px;top:337px;width:1px;height:1px;background:#404040;"></div>
<div style="left:80px;top:337px;width:1px;height:2px;background:#D4D0C8;"></div>
<span id="t27" style="left:28px;top:322px;font-size:11px;color:#000;line-height:14px;white-space:pre;letter-spacing:-0.257px;">Organizer</span>
<span id="t28" style="left:104px;top:322px;font-size:11px;color:#000;line-height:14px;white-space:pre;letter-spacing:-0.335px;">Gallery</span>
<svg style="left:10px;top:320px;" width="16" height="16" viewBox="0 0 16 16"><rect x="0.5" y="1.5" width="11" height="11" fill="#fff" stroke="#5A7EC8"/><rect x="1" y="2" width="10" height="3" fill="#3C6CD8"/><path d="M7 0l2 2.5l-2 2.5l-2-2.5z" fill="#FFD840" stroke="#C09000" stroke-width=".5"/><path d="M12 5l2.5 2.5l-2.5 2.5l-2.5-2.5z" fill="#E040E0"/><path d="M12 10l2.500 2.500l-2.500 2.500l-2.500-2.500z" fill="#40A0F0"/><path d="M9 3v9.500h1M9 7.500h1" stroke="#404040" fill="none" stroke-width=".8"/></svg>
<svg style="left:86px;top:321px;" width="16" height="16" viewBox="0 0 16 16"><rect x="0.5" y="0.500" width="13" height="12" fill="#fff" stroke="#5A7EC8"/><rect x="1" y="1" width="12" height="3" fill="#3C6CD8"/><rect x="5" y="6" width="10" height="8" fill="#E8B820"/><path d="M10 7h5v7h-5l-3-3.500z" fill="#40B030"/><path d="M6 8l2 2.500l-2 2.500z" fill="#fff"/></svg>
<div style="left:4px;top:345px;width:200px;height:18px;background:#0A246A;"></div>
<span id="t29" style="left:8px;top:347px;font-size:11px;color:#fff;line-height:14px;white-space:pre;letter-spacing:-0.162px;">'SE1_Screen' (Panel.Screen) - ...</span>
<svg style="left:174px;top:351px;" width="8" height="9" viewBox="0 0 8 9"><path d="M1.500 0.500h4M2.500 0.500v4M5.500 0.500v4M4.500 0.500v4M0.500 5.500h7M3.500 5.500v3.500" stroke="#fff" fill="none"/></svg>
<svg style="left:190px;top:351px;" width="8" height="7" viewBox="0 0 8 7"><path d="M0 0h2l2 2l2-2h2l-3 3.500l3 3.500h-2l-2-2l-2 2h-2l3-3.500z" fill="#fff"/></svg>
<div style="left:4px;top:365px;width:200px;height:193px;background:#FFFFFF;box-shadow:inset 1px 1px 0 #808080,inset -1px -1px 0 #fff,inset 2px 2px 0 #404040,inset -2px -2px 0 #D4D0C8;"></div>
<div style="left:6px;top:367px;width:106px;height:17px;background:#D4D0C8;box-shadow:inset 1px 1px 0 #fff,inset -1px -1px 0 #404040,inset 2px 2px 0 #D4D0C8,inset -2px -2px 0 #808080;"></div>
<div style="left:112px;top:367px;width:80px;height:17px;background:#D4D0C8;box-shadow:inset 1px 1px 0 #fff,inset -1px -1px 0 #404040,inset 2px 2px 0 #D4D0C8,inset -2px -2px 0 #808080;"></div>
<span id="t30" style="left:12.5px;top:369px;font-size:11px;color:#000;line-height:14px;white-space:pre;letter-spacing:-0.385px;">Property</span>
<div style="left:112px;top:367px;width:74px;height:17px;overflow:hidden;"><span id="t31" style="left:62px;top:2px;font-size:11px;color:#000;line-height:14px;white-space:pre;letter-spacing:-0.666px;">Value</span></div>
<div style="left:6px;top:367px;width:180px;height:173px;overflow:hidden;"><div style="left:0px;top:35px;width:180px;height:1px;background:#D4D0C8;"></div><svg style="left:5px;top:22px;" width="10" height="10" viewBox="0 0 10 10"><defs><linearGradient id="gg" x1="0" y1="0" x2="0" y2="1"><stop offset="0" stop-color="#fff" stop-opacity="0"/><stop offset="1" stop-color="#fff" stop-opacity=".35"/></linearGradient></defs><rect x="0" y="0" width="5" height="5" fill="#28C028"/><rect x="5" y="0" width="5" height="5" fill="#F02828"/><rect x="0" y="5" width="5" height="5" fill="#F8D028"/><rect x="5" y="5" width="5" height="5" fill="#2868E0"/><rect x="0" y="0" width="10" height="5" fill="url(#gg)"/><rect x="0" y="5" width="10" height="5" fill="url(#gg)"/></svg><span id="t32" style="left:18.5px;top:20px;font-size:11px;color:#000;line-height:14px;white-space:pre;letter-spacing:-0.267px;">BackgroundColor</span><div style="left:109px;top:22px;width:10px;height:10px;background:#000000;"></div><span id="t33" style="left:126.5px;top:20px;font-size:11px;color:#000;line-height:14px;white-space:pre;font-weight:bold;letter-spacing:0.772px;">0, 0, 0</span><div style="left:0px;top:52px;width:180px;height:1px;background:#D4D0C8;"></div><span id="t34" style="left:5px;top:37px;font-size:13px;color:#FF40FF;line-height:14px;white-space:pre;font-weight:bold;letter-spacing:-0.392px;">A</span><span id="t35" style="left:18.5px;top:37px;font-size:11px;color:#000;line-height:14px;white-space:pre;letter-spacing:-0.560px;">Caption</span><span id="t36" style="left:108.5px;top:37px;font-size:11px;color:#000;line-height:14px;white-space:pre;letter-spacing:-0.125px;">Screen Title</span><div style="left:0px;top:69px;width:180px;height:1px;background:#D4D0C8;"></div><span id="t37" style="left:5px;top:54px;font-size:13px;color:#FF40FF;line-height:14px;white-space:pre;font-weight:bold;letter-spacing:-0.389px;">A</span><span id="t38" style="left:18.5px;top:54px;font-size:11px;color:#000;line-height:14px;white-space:pre;letter-spacing:-0.146px;">DocString</span><span id="t39" style="left:108.5px;top:54px;font-size:11px;color:#000;line-height:14px;white-space:pre;letter-spacing:0.312px;"></span><div style="left:0px;top:86px;width:180px;height:1px;background:#D4D0C8;"></div><svg style="left:2px;top:72px;" width="16" height="12" viewBox="0 0 16 12"><g transform="translate(6,0)"><rect x="0.500" y="0.500" width="9" height="6" rx="1.500" fill="#F4D878" stroke="#9C7820"/><path d="M2 2.500h2M5 2.500h3M2 4.500h2M5 4.500h3" stroke="#9C7820" stroke-width=".8"/></g><g transform="translate(0,5)"><rect x="0.500" y="0.500" width="9" height="6" rx="1.500" fill="#F4D878" stroke="#9C7820"/><path d="M2 2.500h2M5 2.500h3M2 4.500h2M5 4.500h3" stroke="#9C7820" stroke-width=".8"/></g></svg><span id="t40" style="left:18.5px;top:71px;font-size:11px;color:#000;line-height:14px;white-space:pre;letter-spacing:-0.391px;">FillStyle</span><span id="t41" style="left:108.5px;top:71px;font-size:11px;color:#000;line-height:14px;white-space:pre;letter-spacing:0.028px;">11 - bkBackground</span><div style="left:0px;top:103px;width:180px;height:1px;background:#D4D0C8;"></div><svg style="left:5px;top:90px;" width="10" height="10" viewBox="0 0 10 10"><defs><linearGradient id="gg" x1="0" y1="0" x2="0" y2="1"><stop offset="0" stop-color="#fff" stop-opacity="0"/><stop offset="1" stop-color="#fff" stop-opacity=".35"/></linearGradient></defs><rect x="0" y="0" width="5" height="5" fill="#28C028"/><rect x="5" y="0" width="5" height="5" fill="#F02828"/><rect x="0" y="5" width="5" height="5" fill="#F8D028"/><rect x="5" y="5" width="5" height="5" fill="#2868E0"/><rect x="0" y="0" width="10" height="5" fill="url(#gg)"/><rect x="0" y="5" width="10" height="5" fill="url(#gg)"/></svg><span id="t42" style="left:18.5px;top:88px;font-size:11px;color:#000;line-height:14px;white-space:pre;letter-spacing:-0.344px;">ForegroundColor</span><div style="left:109px;top:90px;width:10px;height:10px;background:#000000;"></div><span id="t43" style="left:126.5px;top:88px;font-size:11px;color:#000;line-height:14px;white-space:pre;letter-spacing:-0.084px;">0, 0, 0</span><div style="left:0px;top:120px;width:180px;height:1px;background:#D4D0C8;"></div><svg style="left:2px;top:106px;" width="16" height="12" viewBox="0 0 16 12"><g transform="translate(6,0)"><rect x="0.500" y="0.500" width="9" height="6" rx="1.500" fill="#F4D878" stroke="#9C7820"/><path d="M2 2.500h2M5 2.500h3M2 4.500h2M5 4.500h3" stroke="#9C7820" stroke-width=".8"/></g><g transform="translate(0,5)"><rect x="0.500" y="0.500" width="9" height="6" rx="1.500" fill="#F4D878" stroke="#9C7820"/><path d="M2 2.500h2M5 2.500h3M2 4.500h2M5 4.500h3" stroke="#9C7820" stroke-width=".8"/></g></svg><span id="t44" style="left:18.5px;top:105px;font-size:11px;color:#000;line-height:14px;white-space:pre;letter-spacing:-0.358px;">GradientStyle</span><span id="t45" style="left:108.5px;top:105px;font-size:11px;color:#000;line-height:14px;white-space:pre;letter-spacing:-0.125px;">0 - leftToRight</span><div style="left:0px;top:137px;width:180px;height:1px;background:#D4D0C8;"></div><span id="t46" style="left:7.5px;top:122px;font-size:12px;color:#3050F0;line-height:14px;white-space:pre;font-weight:bold;letter-spacing:-0.180px;">9</span><span id="t47" style="left:18.5px;top:122px;font-size:11px;color:#000;line-height:14px;white-space:pre;letter-spacing:-0.300px;">Height</span><span id="t48" style="left:108.5px;top:122px;font-size:11px;color:#000;line-height:14px;white-space:pre;font-weight:bold;letter-spacing:0.511px;">15769,9604166667</span><div style="left:0px;top:154px;width:180px;height:1px;background:#D4D0C8;"></div><span id="t49" style="left:7.5px;top:139px;font-size:12px;color:#3050F0;line-height:14px;white-space:pre;font-weight:bold;letter-spacing:-0.182px;">9</span><span id="t50" style="left:18.5px;top:139px;font-size:11px;color:#000;line-height:14px;white-space:pre;letter-spacing:-0.505px;">Layer</span><span id="t51" style="left:108.5px;top:139px;font-size:11px;color:#000;line-height:14px;white-space:pre;letter-spacing:-0.283px;">1</span><div style="left:0px;top:171px;width:180px;height:1px;background:#D4D0C8;"></div><span id="t52" style="left:5px;top:156px;font-size:13px;color:#FF40FF;line-height:14px;white-space:pre;font-weight:bold;letter-spacing:-0.403px;">A</span><span id="t53" style="left:18.5px;top:156px;font-size:11px;color:#000;line-height:14px;white-space:pre;letter-spacing:-0.462px;">Name</span><span id="t54" style="left:108.5px;top:156px;font-size:11px;color:#000;line-height:14px;white-space:pre;font-weight:bold;letter-spacing:0.640px;">SE1_Screen</span><div style="left:106px;top:17px;width:1px;height:160px;background:#D4D0C8;"></div></div>
<div style="left:186px;top:367px;width:16px;height:173px;background-image:conic-gradient(#fff 25%,#D4D0C8 0 50%,#fff 0 75%,#D4D0C8 0);background-size:2px 2px;background-position:0px 1px;"></div>
<div style="left:186px;top:367px;width:16px;height:16px;background:#D4D0C8;box-shadow:inset 1px 1px 0 #D4D0C8,inset -1px -1px 0 #404040,inset 2px 2px 0 #fff,inset -2px -2px 0 #808080;"><div style="left:7px;top:6px;width:1px;height:1px;background:#000;"></div><div style="left:6px;top:7px;width:3px;height:1px;background:#000;"></div><div style="left:5px;top:8px;width:5px;height:1px;background:#000;"></div><div style="left:4px;top:9px;width:7px;height:1px;background:#000;"></div></div>
<div style="left:186px;top:524px;width:16px;height:16px;background:#D4D0C8;box-shadow:inset 1px 1px 0 #D4D0C8,inset -1px -1px 0 #404040,inset 2px 2px 0 #fff,inset -2px -2px 0 #808080;"><div style="left:4px;top:6px;width:7px;height:1px;background:#000;"></div><div style="left:5px;top:7px;width:5px;height:1px;background:#000;"></div><div style="left:6px;top:8px;width:3px;height:1px;background:#000;"></div><div style="left:7px;top:9px;width:1px;height:1px;background:#000;"></div></div>
<div style="left:186px;top:383px;width:16px;height:78px;background:#D4D0C8;box-shadow:inset 1px 1px 0 #D4D0C8,inset -1px -1px 0 #404040,inset 2px 2px 0 #fff,inset -2px -2px 0 #808080;"></div>
<div style="left:6px;top:540px;width:180px;height:16px;background-image:conic-gradient(#fff 25%,#D4D0C8 0 50%,#fff 0 75%,#D4D0C8 0);background-size:2px 2px;background-position:0px 0px;"></div>
<div style="left:6px;top:540px;width:16px;height:16px;background:#D4D0C8;box-shadow:inset 1px 1px 0 #D4D0C8,inset -1px -1px 0 #404040,inset 2px 2px 0 #fff,inset -2px -2px 0 #808080;"><div style="left:5px;top:7px;width:1px;height:1px;background:#000;"></div><div style="left:6px;top:6px;width:1px;height:3px;background:#000;"></div><div style="left:7px;top:5px;width:1px;height:5px;background:#000;"></div><div style="left:8px;top:4px;width:1px;height:7px;background:#000;"></div></div>
<div style="left:170px;top:540px;width:16px;height:16px;background:#D4D0C8;box-shadow:inset 1px 1px 0 #D4D0C8,inset -1px -1px 0 #404040,inset 2px 2px 0 #fff,inset -2px -2px 0 #808080;"><div style="left:7px;top:4px;width:1px;height:7px;background:#000;"></div><div style="left:8px;top:5px;width:1px;height:5px;background:#000;"></div><div style="left:9px;top:6px;width:1px;height:3px;background:#000;"></div><div style="left:10px;top:7px;width:1px;height:1px;background:#000;"></div></div>
<div style="left:22px;top:540px;width:133px;height:16px;background:#D4D0C8;box-shadow:inset 1px 1px 0 #D4D0C8,inset -1px -1px 0 #404040,inset 2px 2px 0 #fff,inset -2px -2px 0 #808080;"></div>
<div style="left:186px;top:540px;width:16px;height:16px;background:#D4D0C8;"></div>
<div style="left:4px;top:560px;width:200px;height:25px;box-shadow:inset 1px 1px 0 #808080,inset -1px -1px 0 #fff;"></div>
<div style="left:208px;top:125px;width:623px;height:461px;border:1px solid #808080;"></div>
<div style="left:209px;top:148px;width:619px;height:1px;background:#FFFFFF;"></div>
<div style="left:209px;top:149px;width:619px;height:1px;background:#FFFFFF;"></div>
<div style="left:210px;top:127px;width:95px;height:22px;background:#D4D0C8;"></div>
<div style="left:210px;top:128px;width:1px;height:20px;background:#FFFFFF;"></div>
<div style="left:211px;top:127px;width:92px;height:1px;background:#FFFFFF;"></div>
<div style="left:303px;top:128px;width:1px;height:21px;background:#808080;"></div>
<div style="left:304px;top:128px;width:1px;height:21px;background:#404040;"></div>
<div style="left:209px;top:148px;width:1px;height:1px;background:#FFFFFF;"></div>
<div style="left:209px;top:149px;width:1px;height:1px;background:#D4D0C8;"></div>
<div style="left:210px;top:148px;width:1px;height:2px;background:#D4D0C8;"></div>
<span id="t55" style="left:232px;top:131px;font-size:11px;color:#000;line-height:14px;white-space:pre;font-weight:bold;letter-spacing:0.189px;">SE1_Screen</span>
<svg style="left:215px;top:129px;" width="16" height="16" viewBox="0 0 16 16"><rect x="1" y="2" width="14" height="13" fill="#fff"/><path d="M3 6h11v8h-11z" fill="#F6F8FE"/><path d="M14 6v8h-11z" fill="#E0E6F6"/><rect x="1" y="2" width="14" height="3" fill="#4C7CE8"/><rect x="1" y="2" width="14" height="1" fill="#6C98F0"/><rect x="8" y="3" width="1.400" height="1.200" fill="#F8E040"/><rect x="10" y="3" width="1.400" height="1.200" fill="#F01020"/><rect x="12" y="3" width="1.400" height="1.200" fill="#F8E040"/><rect x="1" y="5" width="1" height="9" fill="#A0B4E0"/><rect x="14" y="5" width="1" height="10" fill="#2C4470"/><rect x="1" y="14" width="14" height="1" fill="#2C4470"/></svg>
<div style="left:776px;top:129px;width:15px;height:15px;box-shadow:inset 1px 1px 0 #fff,inset -1px -1px 0 #808080;"></div>
<div style="left:794px;top:129px;width:15px;height:15px;box-shadow:inset 1px 1px 0 #fff,inset -1px -1px 0 #808080;"></div>
<div style="left:812px;top:129px;width:15px;height:15px;box-shadow:inset 1px 1px 0 #fff,inset -1px -1px 0 #808080;"></div>
<svg style="left:776px;top:129px;" width="15" height="15" viewBox="0 0 15 15"><path d="M9.500 3.500v8l-5-4z" fill="none" stroke="#404040"/></svg>
<svg style="left:794px;top:129px;" width="15" height="15" viewBox="0 0 15 15"><path d="M5.500 3.500v8l5-4z" fill="none" stroke="#404040"/></svg>
<svg style="left:812px;top:129px;" width="15" height="15" viewBox="0 0 15 15"><path d="M4 4l7 7M11 4l-7 7" fill="none" stroke="#404040" stroke-width="1.500"/></svg>
<div style="left:211px;top:150px;width:617px;height:433px;background:#D4D0C8;box-shadow:inset 1px 1px 0 #808080,inset -1px -1px 0 #fff,inset 2px 2px 0 #404040,inset -2px -2px 0 #D4D0C8;"></div>
<svg style="left:213px;top:152px;background:#000;overflow:hidden;font-family:'Liberation Sans',sans-serif" width="597" height="397" viewBox="0 0 597 397"><defs><path id="gr" d="M2 0h1M9 0h1M17 0h1M25 0h1M32 0h1M40 0h1M47 0h1M55 0h1M62 0h1M70 0h1M77 0h1M85 0h1M93 0h1M100 0h1M108 0h1M115 0h1M123 0h1M130 0h1M138 0h1M145 0h1M153 0h1M161 0h1M168 0h1M176 0h1M183 0h1M191 0h1M198 0h1M206 0h1M213 0h1M221 0h1M229 0h1M236 0h1M244 0h1M251 0h1M259 0h1M266 0h1M274 0h1M282 0h1M289 0h1M297 0h1M304 0h1M312 0h1M319 0h1M327 0h1M334 0h1M342 0h1M350 0h1M357 0h1M365 0h1M372 0h1M380 0h1M387 0h1M395 0h1M402 0h1M410 0h1M418 0h1M425 0h1M433 0h1M440 0h1M448 0h1M455 0h1M463 0h1M470 0h1M478 0h1M486 0h1M493 0h1M501 0h1M508 0h1M516 0h1M523 0h1M531 0h1M539 0h1M546 0h1M554 0h1M561 0h1M569 0h1M576 0h1M584 0h1M591 0h1" stroke="#808080" stroke-width="1" fill="none"/></defs><g shape-rendering="crispEdges"><use href="#gr" y="2.5"/><use href="#gr" y="9.5"/><use href="#gr" y="17.5"/><use href="#gr" y="24.5"/><use href="#gr" y="32.5"/><use href="#gr" y="39.5"/><use href="#gr" y="47.5"/><use href="#gr" y="55.5"/><use href="#gr" y="62.5"/><use href="#gr" y="70.5"/><use href="#gr" y="77.5"/><use href="#gr" y="85.5"/><use href="#gr" y="92.5"/><use href="#gr" y="100.5"/><use href="#gr" y="107.5"/><use href="#gr" y="115.5"/><use href="#gr" y="123.5"/><use href="#gr" y="130.5"/><use href="#gr" y="138.5"/><use href="#gr" y="145.5"/><use href="#gr" y="153.5"/><use href="#gr" y="160.5"/><use href="#gr" y="168.5"/><use href="#gr" y="175.5"/><use href="#gr" y="183.5"/><use href="#gr" y="191.5"/><use href="#gr" y="198.5"/><use href="#gr" y="206.5"/><use href="#gr" y="213.5"/><use href="#gr" y="221.5"/><use href="#gr" y="228.5"/><use href="#gr" y="236.5"/><use href="#gr" y="243.5"/><use href="#gr" y="251.5"/><use href="#gr" y="259.5"/><use href="#gr" y="266.5"/><use href="#gr" y="274.5"/><use href="#gr" y="281.5"/><use href="#gr" y="289.5"/><use href="#gr" y="296.5"/><use href="#gr" y="304.5"/><use href="#gr" y="312.5"/><use href="#gr" y="319.5"/><use href="#gr" y="327.5"/><use href="#gr" y="334.5"/><use href="#gr" y="342.5"/><use href="#gr" y="349.5"/><use href="#gr" y="357.5"/><use href="#gr" y="364.5"/><use href="#gr" y="372.5"/><use href="#gr" y="380.5"/><use href="#gr" y="387.5"/><use href="#gr" y="395.5"/></g><text x="133" y="6" font-size="14" fill="#fff" textLength="32" lengthAdjust="spacingAndGlyphs">Gen1</text><circle cx="149" cy="46" r="24" fill="#FF50FF"/><path d="M139 46.5c2-12 6-12 10 0s8 12 10.500 0" fill="none" stroke="#000" stroke-width="1.600"/><rect x="148" y="69" width="3" height="33" fill="#FF50FF" shape-rendering="crispEdges"/><rect x="148" y="127" width="3" height="21" fill="#FF50FF" shape-rendering="crispEdges"/><rect x="136" y="102" width="25" height="25" fill="#00FF00" shape-rendering="crispEdges"/><text x="175" y="119" font-size="14" fill="#fff" textLength="30.5" lengthAdjust="spacingAndGlyphs">5201</text><text transform="translate(142,93.5) rotate(-90)" font-size="15.500" font-weight="bold" fill="#FF0000" textLength="6.300" lengthAdjust="spacingAndGlyphs">1</text><text transform="translate(142,144.5) rotate(-90)" font-size="15.500" font-weight="bold" fill="#FF0000" textLength="6.300" lengthAdjust="spacingAndGlyphs">2</text><rect x="116" y="148" width="312.500" height="6" rx="3" fill="#FF0000"/><rect x="10" y="72" width="104" height="1" fill="#FFFF00" shape-rendering="crispEdges"/><rect x="10" y="90" width="104" height="1" fill="#FFFF00" shape-rendering="crispEdges"/><rect x="10" y="72" width="1" height="19" fill="#FFFF00" shape-rendering="crispEdges"/><rect x="93" y="72" width="21" height="19" fill="#FFFF00" shape-rendering="crispEdges"/><rect x="14" y="75" width="3" height="8" fill="#FF0000" shape-rendering="crispEdges"/><rect x="15" y="83" width="1" height="2" fill="#FF0000" shape-rendering="crispEdges"/><rect x="14" y="86" width="3" height="3" fill="#FF0000" shape-rendering="crispEdges"/><g transform="translate(96,74)"><rect x="0" y="0" width="15" height="10" fill="#8C8094"/><rect x="0" y="0" width="15" height="1" fill="#A098A8"/><rect x="13.500" y="1" width="1.500" height="9" fill="#685868"/><rect x="2" y="2" width="11" height="7" fill="#E8B030"/><rect x="2" y="2" width="8" height="5" fill="#F4CC60"/><rect x="2" y="7.500" width="11" height="1.500" fill="#C89828"/><rect x="3" y="3" width="2" height="1" fill="#10F010"/><rect x="3" y="5" width="2" height="1" fill="#F01010"/><rect x="6" y="10" width="3" height="2" fill="#7088C0"/><rect x="0" y="13" width="15" height="2.500" fill="#7C98D8"/><rect x="4" y="12" width="7" height="5" fill="#E0A828"/><rect x="5" y="12.500" width="3" height="4" fill="#FCE088"/></g><rect x="10" y="95" width="104" height="1" fill="#FFFF00" shape-rendering="crispEdges"/><rect x="10" y="113" width="104" height="1" fill="#FFFF00" shape-rendering="crispEdges"/><rect x="10" y="95" width="1" height="19" fill="#FFFF00" shape-rendering="crispEdges"/><rect x="93" y="95" width="21" height="19" fill="#FFFF00" shape-rendering="crispEdges"/><rect x="14" y="97" width="3" height="8" fill="#FF0000" shape-rendering="crispEdges"/><rect x="15" y="105" width="1" height="2" fill="#FF0000" shape-rendering="crispEdges"/><rect x="14" y="108" width="3" height="3" fill="#FF0000" shape-rendering="crispEdges"/><g transform="translate(96,97)"><rect x="0" y="0" width="15" height="10" fill="#8C8094"/><rect x="0" y="0" width="15" height="1" fill="#A098A8"/><rect x="13.500" y="1" width="1.500" height="9" fill="#685868"/><rect x="2" y="2" width="11" height="7" fill="#E8B030"/><rect x="2" y="2" width="8" height="5" fill="#F4CC60"/><rect x="2" y="7.500" width="11" height="1.500" fill="#C89828"/><rect x="3" y="3" width="2" height="1" fill="#10F010"/><rect x="3" y="5" width="2" height="1" fill="#F01010"/><rect x="6" y="10" width="3" height="2" fill="#7088C0"/><rect x="0" y="13" width="15" height="2.500" fill="#7C98D8"/><rect x="4" y="12" width="7" height="5" fill="#E0A828"/><rect x="5" y="12.500" width="3" height="4" fill="#FCE088"/></g><rect x="10" y="117" width="104" height="1" fill="#FFFF00" shape-rendering="crispEdges"/><rect x="10" y="136" width="104" height="1" fill="#FFFF00" shape-rendering="crispEdges"/><rect x="10" y="117" width="1" height="20" fill="#FFFF00" shape-rendering="crispEdges"/><rect x="93" y="117" width="21" height="20" fill="#FFFF00" shape-rendering="crispEdges"/><rect x="14" y="120" width="3" height="8" fill="#FF0000" shape-rendering="crispEdges"/><rect x="15" y="128" width="1" height="2" fill="#FF0000" shape-rendering="crispEdges"/><rect x="14" y="131" width="3" height="3" fill="#FF0000" shape-rendering="crispEdges"/><g transform="translate(96,119)"><rect x="0" y="0" width="15" height="10" fill="#8C8094"/><rect x="0" y="0" width="15" height="1" fill="#A098A8"/><rect x="13.500" y="1" width="1.500" height="9" fill="#685868"/><rect x="2" y="2" width="11" height="7" fill="#E8B030"/><rect x="2" y="2" width="8" height="5" fill="#F4CC60"/><rect x="2" y="7.500" width="11" height="1.500" fill="#C89828"/><rect x="3" y="3" width="2" height="1" fill="#10F010"/><rect x="3" y="5" width="2" height="1" fill="#F01010"/><rect x="6" y="10" width="3" height="2" fill="#7088C0"/><rect x="0" y="13" width="15" height="2.500" fill="#7C98D8"/><rect x="4" y="12" width="7" height="5" fill="#E0A828"/><rect x="5" y="12.500" width="3" height="4" fill="#FCE088"/></g><rect x="437" y="142" width="104" height="1" fill="#FFFF00" shape-rendering="crispEdges"/><rect x="437" y="160" width="104" height="1" fill="#FFFF00" shape-rendering="crispEdges"/><rect x="437" y="142" width="1" height="19" fill="#FFFF00" shape-rendering="crispEdges"/><rect x="520" y="142" width="21" height="19" fill="#FFFF00" shape-rendering="crispEdges"/><rect x="441" y="145" width="3" height="8" fill="#FF0000" shape-rendering="crispEdges"/><rect x="442" y="153" width="1" height="2" fill="#FF0000" shape-rendering="crispEdges"/><rect x="441" y="156" width="3" height="3" fill="#FF0000" shape-rendering="crispEdges"/><g transform="translate(523,144)"><rect x="0" y="0" width="15" height="10" fill="#8C8094"/><rect x="0" y="0" width="15" height="1" fill="#A098A8"/><rect x="13.500" y="1" width="1.500" height="9" fill="#685868"/><rect x="2" y="2" width="11" height="7" fill="#E8B030"/><rect x="2" y="2" width="8" height="5" fill="#F4CC60"/><rect x="2" y="7.500" width="11" height="1.500" fill="#C89828"/><rect x="3" y="3" width="2" height="1" fill="#10F010"/><rect x="3" y="5" width="2" height="1" fill="#F01010"/><rect x="6" y="10" width="3" height="2" fill="#7088C0"/><rect x="0" y="13" width="15" height="2.500" fill="#7C98D8"/><rect x="4" y="12" width="7" height="5" fill="#E0A828"/><rect x="5" y="12.500" width="3" height="4" fill="#FCE088"/></g><rect x="342" y="241" width="104" height="1" fill="#FFFF00" shape-rendering="crispEdges"/><rect x="342" y="259" width="104" height="1" fill="#FFFF00" shape-rendering="crispEdges"/><rect x="342" y="241" width="1" height="19" fill="#FFFF00" shape-rendering="crispEdges"/><rect x="425" y="241" width="21" height="19" fill="#FFFF00" shape-rendering="crispEdges"/><rect x="346" y="244" width="3" height="8" fill="#FF0000" shape-rendering="crispEdges"/><rect x="347" y="252" width="1" height="2" fill="#FF0000" shape-rendering="crispEdges"/><rect x="346" y="255" width="3" height="3" fill="#FF0000" shape-rendering="crispEdges"/><g transform="translate(428,243)"><rect x="0" y="0" width="15" height="10" fill="#8C8094"/><rect x="0" y="0" width="15" height="1" fill="#A098A8"/><rect x="13.500" y="1" width="1.500" height="9" fill="#685868"/><rect x="2" y="2" width="11" height="7" fill="#E8B030"/><rect x="2" y="2" width="8" height="5" fill="#F4CC60"/><rect x="2" y="7.500" width="11" height="1.500" fill="#C89828"/><rect x="3" y="3" width="2" height="1" fill="#10F010"/><rect x="3" y="5" width="2" height="1" fill="#F01010"/><rect x="6" y="10" width="3" height="2" fill="#7088C0"/><rect x="0" y="13" width="15" height="2.500" fill="#7C98D8"/><rect x="4" y="12" width="7" height="5" fill="#E0A828"/><rect x="5" y="12.500" width="3" height="4" fill="#FCE088"/></g><rect x="494" y="360" width="104" height="1" fill="#FFFF00" shape-rendering="crispEdges"/><rect x="494" y="378" width="104" height="1" fill="#FFFF00" shape-rendering="crispEdges"/><rect x="494" y="360" width="1" height="19" fill="#FFFF00" shape-rendering="crispEdges"/><rect x="577" y="360" width="21" height="19" fill="#FFFF00" shape-rendering="crispEdges"/><rect x="498" y="363" width="3" height="8" fill="#FF0000" shape-rendering="crispEdges"/><rect x="499" y="371" width="1" height="2" fill="#FF0000" shape-rendering="crispEdges"/><rect x="498" y="374" width="3" height="3" fill="#FF0000" shape-rendering="crispEdges"/><g transform="translate(580,362)"><rect x="0" y="0" width="15" height="10" fill="#8C8094"/><rect x="0" y="0" width="15" height="1" fill="#A098A8"/><rect x="13.500" y="1" width="1.500" height="9" fill="#685868"/><rect x="2" y="2" width="11" height="7" fill="#E8B030"/><rect x="2" y="2" width="8" height="5" fill="#F4CC60"/><rect x="2" y="7.500" width="11" height="1.500" fill="#C89828"/><rect x="3" y="3" width="2" height="1" fill="#10F010"/><rect x="3" y="5" width="2" height="1" fill="#F01010"/><rect x="6" y="10" width="3" height="2" fill="#7088C0"/><rect x="0" y="13" width="15" height="2.500" fill="#7C98D8"/><rect x="4" y="12" width="7" height="5" fill="#E0A828"/><rect x="5" y="12.500" width="3" height="4" fill="#FCE088"/></g><rect x="395" y="46" width="3" height="47" fill="#FF0000" shape-rendering="crispEdges"/><rect x="395" y="46" width="202" height="3" fill="#FF0000" shape-rendering="crispEdges"/><rect x="395" y="93" width="3" height="9" fill="#FF50FF" shape-rendering="crispEdges"/><rect x="395" y="127" width="3" height="21" fill="#FF50FF" shape-rendering="crispEdges"/><rect x="383" y="102" width="25" height="25" fill="#00FF00" shape-rendering="crispEdges"/><text x="421" y="119" font-size="14" fill="#fff" textLength="30.5" lengthAdjust="spacingAndGlyphs">5202</text><text transform="translate(390,93.5) rotate(-90)" font-size="15.500" font-weight="bold" fill="#FF0000" textLength="6.300" lengthAdjust="spacingAndGlyphs">1</text><text transform="translate(390,144.5) rotate(-90)" font-size="15.500" font-weight="bold" fill="#FF0000" textLength="6.300" lengthAdjust="spacingAndGlyphs">2</text><rect x="271" y="154" width="3" height="19" fill="#FF50FF" shape-rendering="crispEdges"/><rect x="259" y="173" width="25" height="25" fill="#00FF00" shape-rendering="crispEdges"/><text x="298" y="190" font-size="14" fill="#fff" textLength="30.5" lengthAdjust="spacingAndGlyphs">5203</text><rect x="271" y="198" width="3" height="17" fill="#FF50FF" shape-rendering="crispEdges"/><rect x="271" y="215" width="3" height="27" fill="#00FF00" shape-rendering="crispEdges"/><text transform="translate(265,164.5) rotate(-90)" font-size="15.500" font-weight="bold" fill="#FF0000" textLength="6.300" lengthAdjust="spacingAndGlyphs">1</text><text transform="translate(265,214.5) rotate(-90)" font-size="15.500" font-weight="bold" fill="#FF0000" textLength="6.300" lengthAdjust="spacingAndGlyphs">2</text><text transform="translate(290,224.5) rotate(-90)" font-size="15.500" font-weight="bold" fill="#FF0000" textLength="6.300" lengthAdjust="spacingAndGlyphs">1</text><path d="M234.5 229.5a9.375 14.500 0 0 0 18.750 0M253.25 229.5a9.375 14.500 0 0 0 18.750 0M272.0 229.5a9.375 14.500 0 0 0 18.750 0M290.75 229.5a9.375 14.500 0 0 0 18.750 0" fill="none" stroke="#00FF00" stroke-width="3" stroke-linecap="round"/><path d="M234.5 272.5a9.375 14.500 0 0 1 18.750 0M253.25 272.5a9.375 14.500 0 0 1 18.750 0M272.0 272.5a9.375 14.500 0 0 1 18.750 0M290.75 272.5a9.375 14.500 0 0 1 18.750 0" fill="none" stroke="#FFFF00" stroke-width="3" stroke-linecap="round"/><text x="203" y="258" font-size="14" fill="#fff" textLength="23" lengthAdjust="spacingAndGlyphs">TR1</text><rect x="271" y="260" width="3" height="28" fill="#FFFF00" shape-rendering="crispEdges"/><rect x="271" y="288" width="3" height="16" fill="#FF50FF" shape-rendering="crispEdges"/><text transform="translate(290,284.0) rotate(-90)" font-size="15.500" font-weight="bold" fill="#FF0000" textLength="6.300" lengthAdjust="spacingAndGlyphs">2</text><text transform="translate(265,295.5) rotate(-90)" font-size="15.500" font-weight="bold" fill="#FF0000" textLength="6.300" lengthAdjust="spacingAndGlyphs">1</text><rect x="259" y="304" width="25" height="25" fill="#00FF00" shape-rendering="crispEdges"/><text x="298" y="322" font-size="14" fill="#fff" textLength="30.5" lengthAdjust="spacingAndGlyphs">5204</text><rect x="271" y="329" width="3" height="19" fill="#FF50FF" shape-rendering="crispEdges"/><rect x="271" y="348" width="3" height="18" fill="#FF0000" shape-rendering="crispEdges"/><text transform="translate(265,345.5) rotate(-90)" font-size="15.500" font-weight="bold" fill="#FF0000" textLength="6.300" lengthAdjust="spacingAndGlyphs">2</text><rect x="67" y="366" width="417" height="6" rx="3" fill="#FF0000"/><rect x="93" y="372" width="3" height="22" fill="#FF0000" shape-rendering="crispEdges"/><rect x="93" y="394" width="3" height="3" fill="#FF50FF" shape-rendering="crispEdges"/><text transform="translate(87,390.5) rotate(-90)" font-size="15.500" font-weight="bold" fill="#FF0000" textLength="6.300" lengthAdjust="spacingAndGlyphs">1</text><rect x="453" y="372" width="3" height="16" fill="#FF0000" shape-rendering="crispEdges"/><rect x="453" y="388" width="3" height="4" fill="#FF50FF" shape-rendering="crispEdges"/><text transform="translate(448,383.0) rotate(-90)" font-size="15.500" font-weight="bold" fill="#FF0000" textLength="6.300" lengthAdjust="spacingAndGlyphs">1</text><rect x="441" y="392" width="25" height="6" fill="#00FF00" shape-rendering="crispEdges"/></svg>
<div style="left:810px;top:152px;width:16px;height:397px;background-image:conic-gradient(#fff 25%,#D4D0C8 0 50%,#fff 0 75%,#D4D0C8 0);background-size:2px 2px;background-position:0px 0px;"></div>
<div style="left:810px;top:152px;width:16px;height:16px;background:#D4D0C8;box-shadow:inset 1px 1px 0 #D4D0C8,inset -1px -1px 0 #404040,inset 2px 2px 0 #fff,inset -2px -2px 0 #808080;"><div style="left:7px;top:6px;width:1px;height:1px;background:#000;"></div><div style="left:6px;top:7px;width:3px;height:1px;background:#000;"></div><div style="left:5px;top:8px;width:5px;height:1px;background:#000;"></div><div style="left:4px;top:9px;width:7px;height:1px;background:#000;"></div></div>
<div style="left:810px;top:533px;width:16px;height:16px;background:#D4D0C8;box-shadow:inset 1px 1px 0 #D4D0C8,inset -1px -1px 0 #404040,inset 2px 2px 0 #fff,inset -2px -2px 0 #808080;"><div style="left:4px;top:6px;width:7px;height:1px;background:#000;"></div><div style="left:5px;top:7px;width:5px;height:1px;background:#000;"></div><div style="left:6px;top:8px;width:3px;height:1px;background:#000;"></div><div style="left:7px;top:9px;width:1px;height:1px;background:#000;"></div></div>
<div style="left:810px;top:176px;width:16px;height:237px;background:#D4D0C8;box-shadow:inset 1px 1px 0 #D4D0C8,inset -1px -1px 0 #404040,inset 2px 2px 0 #fff,inset -2px -2px 0 #808080;"></div>
<div style="left:213px;top:549px;width:597px;height:16px;background-image:conic-gradient(#fff 25%,#D4D0C8 0 50%,#fff 0 75%,#D4D0C8 0);background-size:2px 2px;background-position:1px 1px;"></div>
<div style="left:213px;top:549px;width:16px;height:16px;background:#D4D0C8;box-shadow:inset 1px 1px 0 #D4D0C8,inset -1px -1px 0 #404040,inset 2px 2px 0 #fff,inset -2px -2px 0 #808080;"><div style="left:5px;top:7px;width:1px;height:1px;background:#000;"></div><div style="left:6px;top:6px;width:1px;height:3px;background:#000;"></div><div style="left:7px;top:5px;width:1px;height:5px;background:#000;"></div><div style="left:8px;top:4px;width:1px;height:7px;background:#000;"></div></div>
<div style="left:794px;top:549px;width:16px;height:16px;background:#D4D0C8;box-shadow:inset 1px 1px 0 #D4D0C8,inset -1px -1px 0 #404040,inset 2px 2px 0 #fff,inset -2px -2px 0 #808080;"><div style="left:7px;top:4px;width:1px;height:7px;background:#000;"></div><div style="left:8px;top:5px;width:1px;height:5px;background:#000;"></div><div style="left:9px;top:6px;width:1px;height:3px;background:#000;"></div><div style="left:10px;top:7px;width:1px;height:1px;background:#000;"></div></div>
<div style="left:363px;top:549px;width:324px;height:16px;background:#D4D0C8;box-shadow:inset 1px 1px 0 #D4D0C8,inset -1px -1px 0 #404040,inset 2px 2px 0 #fff,inset -2px -2px 0 #808080;"></div>
<div style="left:213px;top:565px;width:613px;height:1px;background:#000000;"></div>
<div style="left:213px;top:567px;width:13px;height:13px;box-shadow:inset 1px 1px 0 #fff,inset -1px -1px 0 #808080;"></div>
<div style="left:229px;top:567px;width:13px;height:13px;box-shadow:inset 1px 1px 0 #fff,inset -1px -1px 0 #808080;"></div>
<div style="left:245px;top:567px;width:13px;height:13px;box-shadow:inset 1px 1px 0 #fff,inset -1px -1px 0 #808080;"></div>
<div style="left:261px;top:567px;width:13px;height:13px;box-shadow:inset 1px 1px 0 #fff,inset -1px -1px 0 #808080;"></div>
<div style="left:218px;top:573px;width:1px;height:1px;background:#404040;"></div><div style="left:219px;top:572px;width:1px;height:3px;background:#404040;"></div><div style="left:220px;top:571px;width:1px;height:5px;background:#404040;"></div><div style="left:221px;top:570px;width:1px;height:7px;background:#404040;"></div>
<svg style="left:213px;top:567px;" width="13" height="13" viewBox="0 0 13 13"><path d="M3.500 3v7" stroke="#404040"/><path d="M9 3v7l-4-3.500z" fill="#404040"/></svg>
<svg style="left:229px;top:567px;" width="13" height="13" viewBox="0 0 13 13"><path d="M8 3v7l-4-3.500z" fill="#404040"/></svg>
<svg style="left:245px;top:567px;" width="13" height="13" viewBox="0 0 13 13"><path d="M5 3v7l4-3.500z" fill="#404040"/></svg>
<svg style="left:261px;top:567px;" width="13" height="13" viewBox="0 0 13 13"><path d="M9.500 3v7" stroke="#404040"/><path d="M4 3v7l4-3.500z" fill="#404040"/></svg>
<svg style="left:275px;top:565px;" width="120" height="17" viewBox="0 0 120 17"><path d="M56.500 0.500h58.500l-7.500 15h-44z" fill="#D4D0C8" stroke="#000"/><path d="M5.500 0.500l7 15.500h43l7-15.500z" fill="#fff" stroke="#000"/><path d="M6 0.500h56" stroke="#fff"/><path d="M13 16h42" stroke="#fff" stroke-width="2"/></svg>
<span id="t56" style="left:288.7px;top:565px;font-size:11px;color:#000;line-height:14px;white-space:pre;font-weight:bold;letter-spacing:0.104px;">Design</span>
<span id="t57" style="left:342.4px;top:565px;font-size:11px;color:#000;line-height:14px;white-space:pre;letter-spacing:0.055px;">Scripts</span>
<span id="t58" style="left:7.5px;top:591px;font-size:11px;color:#000;line-height:14px;white-space:pre;letter-spacing:-0.255px;">For Help, press F1</span>
<div style="left:293px;top:588px;width:144px;height:20px;box-shadow:inset 1px 1px 0 #808080,inset -1px -1px 0 #fff;"></div>
<div style="left:439px;top:588px;width:143px;height:20px;box-shadow:inset 1px 1px 0 #808080,inset -1px -1px 0 #fff;"></div>
<div style="left:585px;top:588px;width:143px;height:20px;box-shadow:inset 1px 1px 0 #808080,inset -1px -1px 0 #fff;"></div>
<div style="left:731px;top:588px;width:24px;height:20px;box-shadow:inset 1px 1px 0 #808080,inset -1px -1px 0 #fff;"></div>
<div style="left:757px;top:588px;width:26px;height:20px;box-shadow:inset 1px 1px 0 #808080,inset -1px -1px 0 #fff;"></div>
<div style="left:785px;top:588px;width:29px;height:20px;box-shadow:inset 1px 1px 0 #808080,inset -1px -1px 0 #fff;"></div>
<span id="t59" style="left:315px;top:591px;font-size:11px;color:#000;line-height:14px;white-space:pre;letter-spacing:-0.106px;">7329, 2805</span>
<span id="t60" style="left:460.5px;top:591px;font-size:11px;color:#000;line-height:14px;white-space:pre;letter-spacing:0.086px;">0, 0</span>
<span id="t61" style="left:607px;top:591px;font-size:11px;color:#000;line-height:14px;white-space:pre;letter-spacing:-0.023px;">27093,15770</span>
<span id="t62" style="left:733px;top:591px;font-size:11px;color:#808080;line-height:14px;white-space:pre;letter-spacing:-1.208px;">CAP</span>
<span id="t63" style="left:760px;top:591px;font-size:11px;color:#808080;line-height:14px;white-space:pre;letter-spacing:-2.021px;">NUM</span>
<span id="t64" style="left:787px;top:591px;font-size:11px;color:#808080;line-height:14px;white-space:pre;letter-spacing:-1.336px;">SCRL</span>
<svg style="left:298px;top:591px;" width="10" height="14" viewBox="0 0 10 14"><path d="M1 0v11l2.500-2.500l2 4.500l2-1l-2-4.500h3.500z" fill="#202020"/></svg>
<svg style="left:442px;top:590px;" width="14" height="16" viewBox="0 0 14 16"><path d="M3.500 0.500v11M0 5.500h9" stroke="#2050E0" stroke-dasharray="2 1"/><rect x="5" y="5.500" width="8" height="9" fill="#BCBCBC"/><rect x="5.500" y="6" width="7" height="8" fill="none" stroke="#505050" stroke-dasharray="1 1"/></svg>
<svg style="left:587px;top:589px;" width="16" height="18" viewBox="0 0 16 18"><rect x="6.500" y="7" width="8.500" height="9.500" fill="#BCBCBC"/><rect x="7" y="7.500" width="7.500" height="8.500" fill="none" stroke="#505050" stroke-dasharray="1 1"/><path d="M7.500 1v5M7.500 3.500h7M12 1.500l2.500 2l-2.500 2" stroke="#2050E0" fill="none"/><path d="M3.500 8v8M1 16.500h5M1.500 13.500l2 2.500l2-2.500" stroke="#2050E0" fill="none"/></svg>
<svg style="left:820px;top:596px;" width="12" height="12" viewBox="0 0 12 12"><rect x="2" y="11" width="1" height="1" fill="#707070"/><rect x="3" y="10" width="1" height="1" fill="#707070"/><rect x="4" y="9" width="1" height="1" fill="#707070"/><rect x="5" y="8" width="1" height="1" fill="#707070"/><rect x="6" y="7" width="1" height="1" fill="#707070"/><rect x="7" y="6" width="1" height="1" fill="#707070"/><rect x="8" y="5" width="1" height="1" fill="#707070"/><rect x="9" y="4" width="1" height="1" fill="#707070"/><rect x="10" y="3" width="1" height="1" fill="#707070"/><rect x="5" y="11" width="1" height="1" fill="#707070"/><rect x="6" y="10" width="1" height="1" fill="#707070"/><rect x="7" y="9" width="1" height="1" fill="#707070"/><rect x="8" y="8" width="1" height="1" fill="#707070"/><rect x="9" y="7" width="1" height="1" fill="#707070"/><rect x="10" y="6" width="1" height="1" fill="#707070"/><rect x="8" y="11" width="1" height="1" fill="#707070"/><rect x="9" y="10" width="1" height="1" fill="#707070"/><rect x="10" y="9" width="1" height="1" fill="#707070"/></svg></body></html>
